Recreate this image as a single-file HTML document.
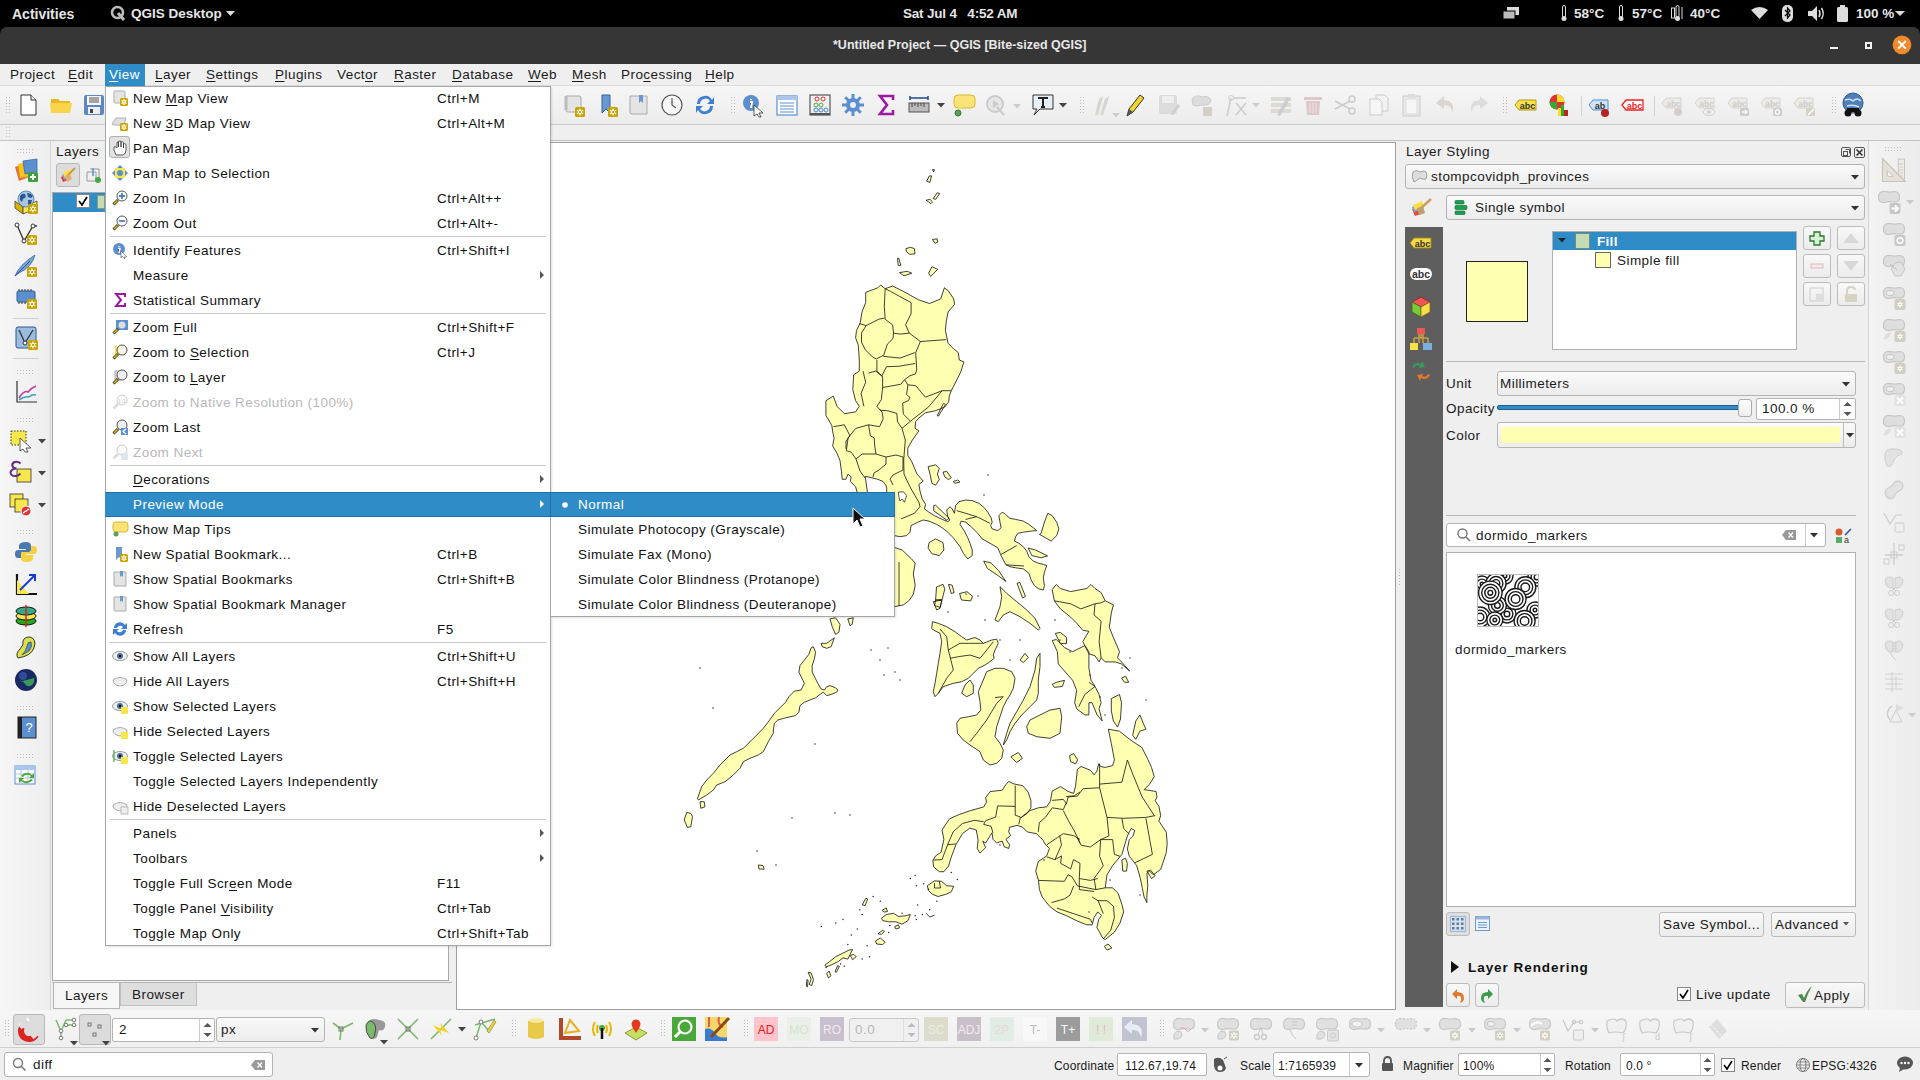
<!DOCTYPE html><html><head><meta charset="utf-8"><style>
html,body{margin:0;padding:0;width:1920px;height:1080px;overflow:hidden;background:#efefef;position:relative;font-family:"Liberation Sans",sans-serif}
.t{position:absolute;white-space:pre;font-family:"Liberation Sans",sans-serif}
u{text-decoration-thickness:1px;text-underline-offset:2px}
svg{overflow:visible}
</style></head><body>
<div style="position:absolute;left:0px;top:0px;width:1920px;height:27px;background:#000"></div>
<div class="t" style="left:12px;top:5.6px;font-size:14px;line-height:16px;color:#e6e6e6;font-weight:bold;letter-spacing:0px;">Activities</div>
<svg style="position:absolute;left:110px;top:5px;" width="16" height="17" viewBox="0 0 16 17"><circle cx="7.5" cy="7.5" r="5.5" fill="none" stroke="#bbb" stroke-width="2.6"/><path d="M8 8 L14 15" stroke="#bbb" stroke-width="3"/></svg>
<div class="t" style="left:131px;top:5.6px;font-size:13.5px;line-height:16px;color:#e6e6e6;font-weight:bold;letter-spacing:0px;">QGIS Desktop</div>
<svg style="position:absolute;left:226px;top:11px;" width="10" height="6" viewBox="0 0 10 6"><path d="M0 0 H9 L4.5 5Z" fill="#ddd"/></svg>
<div class="t" style="left:903px;top:5.6px;font-size:13.5px;line-height:16px;color:#e6e6e6;font-weight:bold;letter-spacing:-0.2px;">Sat Jul 4   4:52 AM</div>
<svg style="position:absolute;left:1503px;top:7px;" width="17" height="13" viewBox="0 0 17 13"><rect x="4" y="0" width="12" height="8" fill="#ddd"/><rect x="0" y="4" width="12" height="8" fill="#bbb" stroke="#000" stroke-width="1"/></svg>
<svg style="position:absolute;left:1561px;top:5px;" width="6" height="17" viewBox="0 0 6 17"><rect x="1.5" y="0.5" width="3" height="12" rx="1.5" fill="none" stroke="#ddd"/><circle cx="3" cy="13.5" r="2.5" fill="#ddd"/></svg>
<svg style="position:absolute;left:1618px;top:5px;" width="6" height="17" viewBox="0 0 6 17"><rect x="1.5" y="0.5" width="3" height="12" rx="1.5" fill="none" stroke="#ddd"/><circle cx="3" cy="13.5" r="2.5" fill="#ddd"/></svg>
<svg style="position:absolute;left:1671px;top:5px;" width="13" height="17" viewBox="0 0 13 17"><rect x="0.5" y="3" width="3" height="10" fill="none" stroke="#ddd"/><rect x="5" y="0.5" width="3" height="12" rx="1.5" fill="none" stroke="#ddd"/><circle cx="6.5" cy="13.5" r="2.5" fill="#ddd"/><path d="M11 2 V14" stroke="#ddd"/></svg>
<div class="t" style="left:1574px;top:5.6px;font-size:13.5px;line-height:16px;color:#e6e6e6;font-weight:bold;letter-spacing:0px;">58°C</div>
<div class="t" style="left:1632px;top:5.6px;font-size:13.5px;line-height:16px;color:#e6e6e6;font-weight:bold;letter-spacing:0px;">57°C</div>
<div class="t" style="left:1690px;top:5.6px;font-size:13.5px;line-height:16px;color:#e6e6e6;font-weight:bold;letter-spacing:0px;">40°C</div>
<svg style="position:absolute;left:1751px;top:7px;" width="17" height="12" viewBox="0 0 17 12"><path d="M0 3 Q8.5 -3 17 3 L8.5 12Z" fill="#ddd"/></svg>
<svg style="position:absolute;left:1782px;top:5px;" width="11" height="17" viewBox="0 0 11 17"><rect x="0" y="0" width="11" height="17" rx="5" fill="#ddd"/><path d="M3 5 L8 10 L5.5 13 V3 L8 6 L3 11" stroke="#000" stroke-width="1.2" fill="none"/></svg>
<svg style="position:absolute;left:1808px;top:6px;" width="17" height="15" viewBox="0 0 17 15"><path d="M0 5 H4 L9 0 V15 L4 10 H0Z" fill="#ddd"/><path d="M11 4 Q13 7.5 11 11 M13.5 2 Q17 7.5 13.5 13" stroke="#ddd" stroke-width="1.5" fill="none"/></svg>
<svg style="position:absolute;left:1837px;top:5px;" width="11" height="17" viewBox="0 0 11 17"><rect x="3" y="0" width="5" height="2" fill="#ddd"/><rect x="0" y="2" width="11" height="15" rx="1.5" fill="#ddd"/></svg>
<div class="t" style="left:1856px;top:5.6px;font-size:13.5px;line-height:16px;color:#e6e6e6;font-weight:bold;letter-spacing:0px;">100 %</div>
<svg style="position:absolute;left:1895px;top:11px;" width="10" height="6" viewBox="0 0 10 6"><path d="M0 0 H10 L5 5Z" fill="#ddd"/></svg>
<div style="position:absolute;left:0px;top:27px;width:1920px;height:10px;background:#000"></div>
<div style="position:absolute;left:0px;top:27px;width:1920px;height:37px;background:#363636;border-radius:7px 7px 0 0"></div>
<div class="t" style="left:833px;top:38.1px;font-size:12.5px;line-height:15px;color:#e8e8e8;font-weight:bold;letter-spacing:0px;">*Untitled Project — QGIS [Bite-sized QGIS]</div>
<div style="position:absolute;left:1830px;top:47px;width:8px;height:2px;background:#f2f2f2"></div>
<div style="position:absolute;left:1865px;top:42px;width:7px;height:7px;border:2px solid #f2f2f2;box-sizing:border-box"></div>
<svg style="position:absolute;left:1891px;top:34px;" width="22" height="22" viewBox="0 0 22 22"><circle cx="11" cy="10.8" r="9.4" fill="#f08a2c"/><path d="M7.2 7 L14.8 14.6 M14.8 7 L7.2 14.6" stroke="#fff" stroke-width="2"/></svg>
<div style="position:absolute;left:0px;top:64px;width:1920px;height:22px;background:#efefef"></div>
<div style="position:absolute;left:0px;top:85px;width:1920px;height:1px;background:#dcdcdc"></div>
<div style="position:absolute;left:105px;top:64px;width:40px;height:22px;background:#308cc6"></div>
<div class="t" style="left:10px;top:67.1px;font-size:13.5px;line-height:16px;color:#1a1a1a;font-weight:normal;letter-spacing:0.45px;">Project</div>
<div class="t" style="left:68px;top:67.1px;font-size:13.5px;line-height:16px;color:#1a1a1a;font-weight:normal;letter-spacing:0.45px;"><u>E</u>dit</div>
<div class="t" style="left:109px;top:67.1px;font-size:13.5px;line-height:16px;color:#fff;font-weight:normal;letter-spacing:0.45px;"><u>V</u>iew</div>
<div class="t" style="left:155px;top:67.1px;font-size:13.5px;line-height:16px;color:#1a1a1a;font-weight:normal;letter-spacing:0.45px;"><u>L</u>ayer</div>
<div class="t" style="left:206px;top:67.1px;font-size:13.5px;line-height:16px;color:#1a1a1a;font-weight:normal;letter-spacing:0.45px;"><u>S</u>ettings</div>
<div class="t" style="left:275px;top:67.1px;font-size:13.5px;line-height:16px;color:#1a1a1a;font-weight:normal;letter-spacing:0.45px;"><u>P</u>lugins</div>
<div class="t" style="left:337px;top:67.1px;font-size:13.5px;line-height:16px;color:#1a1a1a;font-weight:normal;letter-spacing:0.45px;">Vect<u>o</u>r</div>
<div class="t" style="left:394px;top:67.1px;font-size:13.5px;line-height:16px;color:#1a1a1a;font-weight:normal;letter-spacing:0.45px;"><u>R</u>aster</div>
<div class="t" style="left:452px;top:67.1px;font-size:13.5px;line-height:16px;color:#1a1a1a;font-weight:normal;letter-spacing:0.45px;"><u>D</u>atabase</div>
<div class="t" style="left:528px;top:67.1px;font-size:13.5px;line-height:16px;color:#1a1a1a;font-weight:normal;letter-spacing:0.45px;"><u>W</u>eb</div>
<div class="t" style="left:572px;top:67.1px;font-size:13.5px;line-height:16px;color:#1a1a1a;font-weight:normal;letter-spacing:0.45px;"><u>M</u>esh</div>
<div class="t" style="left:621px;top:67.1px;font-size:13.5px;line-height:16px;color:#1a1a1a;font-weight:normal;letter-spacing:0.45px;">Pro<u>c</u>essing</div>
<div class="t" style="left:705px;top:67.1px;font-size:13.5px;line-height:16px;color:#1a1a1a;font-weight:normal;letter-spacing:0.45px;"><u>H</u>elp</div>
<div style="position:absolute;left:0px;top:86px;width:1920px;height:38px;background:linear-gradient(#f6f6f6,#ececec)"></div>
<div style="position:absolute;left:0px;top:124px;width:1920px;height:1px;background:#c9c9c9"></div>
<div style="position:absolute;left:0px;top:125px;width:1920px;height:15px;background:#efefef"></div>
<div style="position:absolute;left:0px;top:140px;width:1920px;height:1px;background:#c4c4c4"></div>
<svg style="position:absolute;left:6px;top:97px;" width="4" height="20" viewBox="0 0 4 20"><rect x="0" y="0" width="1" height="1" fill="#bdbdbd"/><rect x="3" y="0" width="1" height="1" fill="#bdbdbd"/><rect x="0" y="3" width="1" height="1" fill="#bdbdbd"/><rect x="3" y="3" width="1" height="1" fill="#bdbdbd"/><rect x="0" y="6" width="1" height="1" fill="#bdbdbd"/><rect x="3" y="6" width="1" height="1" fill="#bdbdbd"/><rect x="0" y="9" width="1" height="1" fill="#bdbdbd"/><rect x="3" y="9" width="1" height="1" fill="#bdbdbd"/><rect x="0" y="12" width="1" height="1" fill="#bdbdbd"/><rect x="3" y="12" width="1" height="1" fill="#bdbdbd"/><rect x="0" y="15" width="1" height="1" fill="#bdbdbd"/><rect x="3" y="15" width="1" height="1" fill="#bdbdbd"/></svg>
<svg style="position:absolute;left:16px;top:93px;" width="24" height="24" viewBox="0 0 24 24"><path d="M5 2 H15 L20 7 V22 H5Z" fill="#fff" stroke="#333" stroke-width="1"/><path d="M15 2 V7 H20" fill="#eee" stroke="#333"/></svg>
<svg style="position:absolute;left:49px;top:93px;" width="24" height="24" viewBox="0 0 24 24"><path d="M2 6 H9 L11 8 H21 V20 H2Z" fill="#e8b820"/><path d="M1 10 H23 L21 20 H2Z" fill="#fad44a"/></svg>
<svg style="position:absolute;left:82px;top:93px;" width="24" height="24" viewBox="0 0 24 24"><rect x="2" y="2" width="20" height="20" rx="2" fill="#5b87c5"/><rect x="5" y="3" width="14" height="9" fill="#f4f4f4"/><path d="M7 5 H17 M7 7 H17 M7 9 H17" stroke="#555"/><rect x="6" y="14" width="12" height="7" fill="#eee"/><rect x="8" y="16" width="3" height="4" fill="#444"/></svg>
<svg style="position:absolute;left:562px;top:93px;" width="24" height="24" viewBox="0 0 24 24"><path d="M4 3 H17 Q19 3 19 5 V19 H6 Q4 19 4 17Z" fill="#e4e4e4" stroke="#aaa"/><path d="M4 3 V17" stroke="#bbb" stroke-width="3"/><rect x="13.0" y="14.0" width="10" height="10" rx="1.5" fill="#c9a400"/><circle cx="18" cy="19" r="1.62" fill="none" stroke="#fff" stroke-width="1"/><path d="M19.40 19.81 L21.12 20.80 M18.00 20.62 L18.00 22.60 M16.60 19.81 L14.88 20.80 M16.60 18.19 L14.88 17.20 M18.00 17.38 L18.00 15.40 M19.40 18.19 L21.12 17.20" stroke="#fff" stroke-width="1.2"/></svg>
<svg style="position:absolute;left:596px;top:93px;" width="24" height="24" viewBox="0 0 24 24"><path d="M6 2 H14 V20 L10 16 L6 20Z" fill="#6a98d0" stroke="#36649e"/><rect x="12.0" y="14.0" width="10" height="10" rx="1.5" fill="#c9a400"/><circle cx="17" cy="19" r="1.62" fill="none" stroke="#fff" stroke-width="1"/><path d="M18.40 19.81 L20.12 20.80 M17.00 20.62 L17.00 22.60 M15.60 19.81 L13.88 20.80 M15.60 18.19 L13.88 17.20 M17.00 17.38 L17.00 15.40 M18.40 18.19 L20.12 17.20" stroke="#fff" stroke-width="1.2"/></svg>
<svg style="position:absolute;left:627px;top:93px;" width="24" height="24" viewBox="0 0 24 24"><path d="M3 3 H20 V21 H5 Q3 21 3 19Z" fill="#e4e4e4" stroke="#aaa"/><path d="M12 2 H16 V10 L14 8 L12 10Z" fill="#6a98d0"/></svg>
<svg style="position:absolute;left:660px;top:93px;" width="24" height="24" viewBox="0 0 24 24"><circle cx="12" cy="12" r="10" fill="#f6f6f6" stroke="#555" stroke-width="1.2"/><path d="M12 5 V12 L16 15" stroke="#555" stroke-width="1.2" fill="none"/></svg>
<svg style="position:absolute;left:693px;top:93px;" width="24" height="24" viewBox="0 0 24 24"><path d="M4 11 A8 8 0 0 1 19 7 L21 4 V11 H14 L17 8 A5.5 5.5 0 0 0 7 11Z" fill="#3f7fcf"/><path d="M20 13 A8 8 0 0 1 5 17 L3 20 V13 H10 L7 16 A5.5 5.5 0 0 0 17 13Z" fill="#3f7fcf"/></svg>
<svg style="position:absolute;left:731px;top:97px;" width="4" height="20" viewBox="0 0 4 20"><rect x="0" y="0" width="1" height="1" fill="#bdbdbd"/><rect x="3" y="0" width="1" height="1" fill="#bdbdbd"/><rect x="0" y="3" width="1" height="1" fill="#bdbdbd"/><rect x="3" y="3" width="1" height="1" fill="#bdbdbd"/><rect x="0" y="6" width="1" height="1" fill="#bdbdbd"/><rect x="3" y="6" width="1" height="1" fill="#bdbdbd"/><rect x="0" y="9" width="1" height="1" fill="#bdbdbd"/><rect x="3" y="9" width="1" height="1" fill="#bdbdbd"/><rect x="0" y="12" width="1" height="1" fill="#bdbdbd"/><rect x="3" y="12" width="1" height="1" fill="#bdbdbd"/><rect x="0" y="15" width="1" height="1" fill="#bdbdbd"/><rect x="3" y="15" width="1" height="1" fill="#bdbdbd"/></svg>
<svg style="position:absolute;left:741px;top:93px;" width="24" height="24" viewBox="0 0 24 24"><circle cx="10" cy="10" r="8" fill="#5b8fd0"/><path d="M10 6 V7 M9 9 H11 L10 15" stroke="#fff" stroke-width="2"/><path d="M13 12 L22 20 L18 20 L20 24 L18 24 L16 21 L13 23Z" fill="#fff" stroke="#333" stroke-width="0.8"/></svg>
<svg style="position:absolute;left:775px;top:93px;" width="24" height="24" viewBox="0 0 24 24"><rect x="2" y="3" width="20" height="19" fill="#fff" stroke="#5b8fd0" stroke-width="1.2"/><rect x="2" y="3" width="20" height="4" fill="#aac6ea"/><path d="M5 10 H19 M5 13 H19 M5 16 H19 M5 19 H19" stroke="#5b8fd0"/></svg>
<svg style="position:absolute;left:808px;top:93px;" width="24" height="24" viewBox="0 0 24 24"><rect x="2" y="2" width="20" height="20" fill="none" stroke="#555" stroke-width="1.2"/><path d="M2 21 H22" stroke="#555" stroke-width="2"/><circle cx="9" cy="6" r="2" fill="none" stroke="#d33"/><circle cx="15" cy="6" r="2" fill="none" stroke="#d33"/><circle cx="8" cy="12" r="2" fill="none" stroke="#4a4"/><circle cx="13" cy="12" r="2" fill="none" stroke="#4a4"/><circle cx="8" cy="17" r="2" fill="none" stroke="#48c"/><circle cx="13" cy="17" r="2" fill="none" stroke="#48c"/><circle cx="18" cy="17" r="2" fill="none" stroke="#48c"/></svg>
<svg style="position:absolute;left:841px;top:93px;" width="24" height="24" viewBox="0 0 24 24"><g fill="#5b8fd0"><rect x="10.5" y="1" width="3" height="6" transform="rotate(0 12 12)"/><rect x="10.5" y="1" width="3" height="6" transform="rotate(45 12 12)"/><rect x="10.5" y="1" width="3" height="6" transform="rotate(90 12 12)"/><rect x="10.5" y="1" width="3" height="6" transform="rotate(135 12 12)"/><rect x="10.5" y="1" width="3" height="6" transform="rotate(180 12 12)"/><rect x="10.5" y="1" width="3" height="6" transform="rotate(225 12 12)"/><rect x="10.5" y="1" width="3" height="6" transform="rotate(270 12 12)"/><rect x="10.5" y="1" width="3" height="6" transform="rotate(315 12 12)"/></g><circle cx="12" cy="12" r="7" fill="#5b8fd0"/><circle cx="12" cy="12" r="3" fill="#eef"/></svg>
<svg style="position:absolute;left:874px;top:93px;" width="24" height="24" viewBox="0 0 24 24"><path d="M5 3 H19 V7 M18 3 H6 L13 12 L6 21 H19 V17" fill="none" stroke="#9a1aa0" stroke-width="2.6"/></svg>
<svg style="position:absolute;left:907px;top:93px;" width="24" height="24" viewBox="0 0 24 24"><path d="M3 5 H21 M3 3 V7 M21 3 V7" stroke="#1f4a8a" stroke-width="1.5"/><rect x="2" y="10" width="20" height="9" fill="#bbb" stroke="#555"/><path d="M5 10 V14 M8 10 V13 M11 10 V14 M14 10 V13 M17 10 V14" stroke="#444"/></svg>
<svg style="position:absolute;left:937px;top:103px;" width="8" height="5" viewBox="0 0 8 5"><path d="M0 0 H8 L4 4.5Z" fill="#444"/></svg>
<svg style="position:absolute;left:952px;top:93px;" width="24" height="24" viewBox="0 0 24 24"><rect x="2" y="2" width="21" height="13" rx="4" fill="#fbe37a" stroke="#d9b92a"/><path d="M7 14 L5 19 L11 14" fill="#fbe37a"/><circle cx="6" cy="20" r="3" fill="#5aa05a" stroke="#3a7a3a"/></svg>
<svg style="position:absolute;left:984px;top:93px;" width="24" height="24" viewBox="0 0 24 24"><circle cx="11" cy="11" r="8" fill="#e6e6e6" stroke="#ccc" stroke-width="2"/><path d="M9 7 L15 11 L9 15Z" fill="#ccc"/><path d="M13 14 L20 22" stroke="#ccc" stroke-width="2"/></svg>
<svg style="position:absolute;left:1013px;top:104px;" width="8" height="5" viewBox="0 0 8 5"><path d="M0 0 H8 L4 4.5Z" fill="#ccc"/></svg>
<svg style="position:absolute;left:1031px;top:93px;" width="24" height="24" viewBox="0 0 24 24"><path d="M2 2 H22 V16 H9 L3 22 L6 16 H2Z" fill="#e8f0f6" stroke="#333"/><path d="M7 5 H17 M12 5 V14 M10 14 H14" stroke="#222" stroke-width="2"/></svg>
<svg style="position:absolute;left:1059px;top:103px;" width="8" height="5" viewBox="0 0 8 5"><path d="M0 0 H8 L4 4.5Z" fill="#444"/></svg>
<svg style="position:absolute;left:1080px;top:97px;" width="4" height="20" viewBox="0 0 4 20"><rect x="0" y="0" width="1" height="1" fill="#bdbdbd"/><rect x="3" y="0" width="1" height="1" fill="#bdbdbd"/><rect x="0" y="3" width="1" height="1" fill="#bdbdbd"/><rect x="3" y="3" width="1" height="1" fill="#bdbdbd"/><rect x="0" y="6" width="1" height="1" fill="#bdbdbd"/><rect x="3" y="6" width="1" height="1" fill="#bdbdbd"/><rect x="0" y="9" width="1" height="1" fill="#bdbdbd"/><rect x="3" y="9" width="1" height="1" fill="#bdbdbd"/><rect x="0" y="12" width="1" height="1" fill="#bdbdbd"/><rect x="3" y="12" width="1" height="1" fill="#bdbdbd"/><rect x="0" y="15" width="1" height="1" fill="#bdbdbd"/><rect x="3" y="15" width="1" height="1" fill="#bdbdbd"/></svg>
<svg style="position:absolute;left:1090px;top:93px;" width="24" height="24" viewBox="0 0 24 24"><path d="M5 22 L9 6 L13 3 L12 8 L8 22Z" fill="#d8d6d0"/><path d="M10 22 L15 6 L19 3 L18 8 L13 22Z" fill="#d8d6d0"/></svg>
<svg style="position:absolute;left:1112px;top:113px;" width="8" height="5" viewBox="0 0 8 5"><path d="M0 0 H8 L4 4.5Z" fill="#ccc"/></svg>
<svg style="position:absolute;left:1123px;top:93px;" width="24" height="24" viewBox="0 0 24 24"><path d="M4 23 L6 16 L17 2 L21 5 L10 19Z" fill="#f2d430" stroke="#333" stroke-width="1"/><path d="M4 23 L6 16 L10 19Z" fill="#555"/></svg>
<svg style="position:absolute;left:1157px;top:93px;" width="24" height="24" viewBox="0 0 24 24"><rect x="2" y="2" width="18" height="19" rx="2" fill="#dcdcdc"/><rect x="5" y="3" width="12" height="7" fill="#eee"/><path d="M14 21 L21 11 L23 13 L16 22Z" fill="#ccc"/></svg>
<svg style="position:absolute;left:1190px;top:93px;" width="24" height="24" viewBox="0 0 24 24"><path d="M2 6 Q6 1 12 4 Q18 2 21 7 Q20 13 12 12 Q6 14 3 12Z" fill="#dcdcdc" stroke="#ccc"/><rect x="13" y="14" width="9" height="9" fill="#d2cfc8"/></svg>
<svg style="position:absolute;left:1224px;top:93px;" width="24" height="24" viewBox="0 0 24 24"><circle cx="7" cy="5" r="2.5" fill="none" stroke="#ccc"/><path d="M9 5 H22 M3 23 L7 5 M12 10 L22 22 M22 10 L12 22" stroke="#ccc" stroke-width="1.5"/></svg>
<svg style="position:absolute;left:1252px;top:103px;" width="8" height="5" viewBox="0 0 8 5"><path d="M0 0 H8 L4 4.5Z" fill="#ccc"/></svg>
<svg style="position:absolute;left:1269px;top:93px;" width="24" height="24" viewBox="0 0 24 24"><rect x="2" y="4" width="20" height="4" fill="#dcdbd3"/><rect x="2" y="10" width="20" height="4" fill="#dcdbd3"/><rect x="2" y="16" width="20" height="4" fill="#dcdbd3"/><path d="M8 22 L18 4 L21 6 L11 23Z" fill="#ccc"/></svg>
<svg style="position:absolute;left:1301px;top:93px;" width="24" height="24" viewBox="0 0 24 24"><rect x="3" y="4" width="18" height="3" fill="#ddc8c8"/><path d="M5 8 H19 L18 22 H6Z" fill="#ddc8c8"/><path d="M9 10 V20 M12 10 V20 M15 10 V20" stroke="#f0e6e6"/></svg>
<svg style="position:absolute;left:1334px;top:93px;" width="24" height="24" viewBox="0 0 24 24"><circle cx="18" cy="18" r="3" fill="none" stroke="#ccc" stroke-width="1.5"/><circle cx="18" cy="6" r="3" fill="none" stroke="#ccc" stroke-width="1.5"/><path d="M1 8 L16 16 M1 16 L16 8" stroke="#ccc" stroke-width="1.5"/></svg>
<svg style="position:absolute;left:1367px;top:93px;" width="24" height="24" viewBox="0 0 24 24"><path d="M9 2 H18 L21 5 V18 H9Z" fill="#f2f2f2" stroke="#ccc"/><path d="M3 6 H12 L15 9 V22 H3Z" fill="#f6f6f6" stroke="#ccc"/></svg>
<svg style="position:absolute;left:1400px;top:93px;" width="24" height="24" viewBox="0 0 24 24"><rect x="3" y="3" width="17" height="20" fill="#e8e8e8" stroke="#ccc"/><rect x="6" y="6" width="11" height="15" fill="#f6f6f6" stroke="#ddd"/><rect x="8" y="1" width="7" height="4" fill="#ddd"/></svg>
<svg style="position:absolute;left:1434px;top:93px;" width="24" height="24" viewBox="0 0 24 24"><path d="M10 3 L2 10 L10 16 V12 Q18 12 18 20 Q22 8 10 7Z" fill="#dcd6d0"/></svg>
<svg style="position:absolute;left:1466px;top:93px;" width="24" height="24" viewBox="0 0 24 24"><path d="M14 3 L22 10 L14 16 V12 Q6 12 6 20 Q2 8 14 7Z" fill="#dcdcdc"/></svg>
<svg style="position:absolute;left:1503px;top:97px;" width="4" height="20" viewBox="0 0 4 20"><rect x="0" y="0" width="1" height="1" fill="#bdbdbd"/><rect x="3" y="0" width="1" height="1" fill="#bdbdbd"/><rect x="0" y="3" width="1" height="1" fill="#bdbdbd"/><rect x="3" y="3" width="1" height="1" fill="#bdbdbd"/><rect x="0" y="6" width="1" height="1" fill="#bdbdbd"/><rect x="3" y="6" width="1" height="1" fill="#bdbdbd"/><rect x="0" y="9" width="1" height="1" fill="#bdbdbd"/><rect x="3" y="9" width="1" height="1" fill="#bdbdbd"/><rect x="0" y="12" width="1" height="1" fill="#bdbdbd"/><rect x="3" y="12" width="1" height="1" fill="#bdbdbd"/><rect x="0" y="15" width="1" height="1" fill="#bdbdbd"/><rect x="3" y="15" width="1" height="1" fill="#bdbdbd"/></svg>
<svg style="position:absolute;left:1514px;top:93px;" width="24" height="24" viewBox="0 0 24 24"><path d="M1 12 L5 7 H22 V17 H5Z" fill="#f7e04a" stroke="#b09a10"/><text x="13.5" y="15.5" font-size="9" font-weight="bold" text-anchor="middle" font-family="Liberation Sans" fill="#333">abc</text></svg>
<svg style="position:absolute;left:1548px;top:93px;" width="24" height="24" viewBox="0 0 24 24"><circle cx="9" cy="9" r="7.5" fill="#d33"/><path d="M9 9 V1.5 A7.5 7.5 0 0 1 16.5 9Z" fill="#f7dd2a"/><path d="M9 9 H1.5 A7.5 7.5 0 0 0 9 16.5Z" fill="#3a3"/><rect x="10" y="15" width="3" height="8" fill="#f7dd2a"/><rect x="13" y="12" width="3" height="11" fill="#3a3"/><rect x="16" y="17" width="4" height="6" fill="#b22"/></svg>
<div style="position:absolute;left:1581px;top:96px;width:1px;height:20px;background:#d0d0d0"></div>
<svg style="position:absolute;left:1588px;top:93px;" width="24" height="24" viewBox="0 0 24 24"><path d="M1 12 L5 7 H20 V17 H5Z" fill="#cfe3f7" stroke="#4c8ed8"/><text x="12" y="15.5" font-size="9" font-weight="bold" text-anchor="middle" font-family="Liberation Sans" fill="#333">ab</text><circle cx="17" cy="20" r="4" fill="#b22"/></svg>
<svg style="position:absolute;left:1621px;top:93px;" width="24" height="24" viewBox="0 0 24 24"><path d="M1 12 L5 7 H22 V17 H5Z" fill="#fff" stroke="#e22" stroke-width="1.3"/><text x="13.5" y="15.5" font-size="9" font-weight="bold" text-anchor="middle" font-family="Liberation Sans" fill="#e22">abc</text></svg>
<div style="position:absolute;left:1654px;top:96px;width:1px;height:20px;background:#d0d0d0"></div>
<svg style="position:absolute;left:1661px;top:93px;" width="24" height="24" viewBox="0 0 24 24"><path d="M1 10 L5 5 H20 V15 H5Z" fill="#ecebe6" stroke="#d6d4cc"/><text x="12.5" y="13.5" font-size="8.5" font-weight="bold" text-anchor="middle" font-family="Liberation Sans" fill="#ccc">abc</text><circle cx="17" cy="19" r="4" fill="#d6cccc"/></svg>
<svg style="position:absolute;left:1694px;top:93px;" width="24" height="24" viewBox="0 0 24 24"><path d="M1 10 L5 5 H20 V15 H5Z" fill="#ecebe6" stroke="#d6d4cc"/><text x="12.5" y="13.5" font-size="8.5" font-weight="bold" text-anchor="middle" font-family="Liberation Sans" fill="#ccc">abc</text><ellipse cx="15" cy="19" rx="6" ry="3.5" fill="none" stroke="#ccc"/><circle cx="15" cy="19" r="1.8" fill="#ccc"/></svg>
<svg style="position:absolute;left:1727px;top:93px;" width="24" height="24" viewBox="0 0 24 24"><path d="M1 10 L5 5 H20 V15 H5Z" fill="#ecebe6" stroke="#d6d4cc"/><text x="12.5" y="13.5" font-size="8.5" font-weight="bold" text-anchor="middle" font-family="Liberation Sans" fill="#ccc">abc</text><rect x="13" y="15" width="9" height="8" rx="1.5" fill="#ccc"/><path d="M15 19 H20 M18 17 L20 19 L18 21" stroke="#fff" stroke-width="1.5" fill="none"/></svg>
<svg style="position:absolute;left:1760px;top:93px;" width="24" height="24" viewBox="0 0 24 24"><path d="M1 10 L5 5 H20 V15 H5Z" fill="#ecebe6" stroke="#d6d4cc"/><text x="12.5" y="13.5" font-size="8.5" font-weight="bold" text-anchor="middle" font-family="Liberation Sans" fill="#ccc">abc</text><rect x="13" y="15" width="9" height="8" rx="1.5" fill="#ccc"/><circle cx="17.5" cy="19" r="2.2" fill="none" stroke="#fff" stroke-width="1.3"/></svg>
<svg style="position:absolute;left:1793px;top:93px;" width="24" height="24" viewBox="0 0 24 24"><path d="M1 10 L5 5 H20 V15 H5Z" fill="#ecebe6" stroke="#d6d4cc"/><text x="12.5" y="13.5" font-size="8.5" font-weight="bold" text-anchor="middle" font-family="Liberation Sans" fill="#ccc">abc</text><rect x="13" y="15" width="9" height="8" rx="1.5" fill="#d6d2c4"/><path d="M15 22 L21 16" stroke="#fff" stroke-width="1.5"/></svg>
<svg style="position:absolute;left:1832px;top:97px;" width="4" height="20" viewBox="0 0 4 20"><rect x="0" y="0" width="1" height="1" fill="#bdbdbd"/><rect x="3" y="0" width="1" height="1" fill="#bdbdbd"/><rect x="0" y="3" width="1" height="1" fill="#bdbdbd"/><rect x="3" y="3" width="1" height="1" fill="#bdbdbd"/><rect x="0" y="6" width="1" height="1" fill="#bdbdbd"/><rect x="3" y="6" width="1" height="1" fill="#bdbdbd"/><rect x="0" y="9" width="1" height="1" fill="#bdbdbd"/><rect x="3" y="9" width="1" height="1" fill="#bdbdbd"/><rect x="0" y="12" width="1" height="1" fill="#bdbdbd"/><rect x="3" y="12" width="1" height="1" fill="#bdbdbd"/><rect x="0" y="15" width="1" height="1" fill="#bdbdbd"/><rect x="3" y="15" width="1" height="1" fill="#bdbdbd"/></svg>
<svg style="position:absolute;left:1841px;top:93px;" width="24" height="24" viewBox="0 0 24 24"><circle cx="12" cy="10" r="10" fill="#4f7fb8" stroke="#2d5a8e"/><path d="M4 7 Q9 5 12 8 Q16 4 20 8 M6 13 Q12 11 18 14" stroke="#cfe0f0" stroke-width="1.5" fill="none"/><circle cx="7" cy="20" r="3.5" fill="#111"/><circle cx="17" cy="20" r="3.5" fill="#111"/><rect x="6" y="15" width="12" height="4" fill="#111"/></svg>
<svg style="position:absolute;left:6px;top:127px;" width="4" height="12" viewBox="0 0 4 12"><rect x="0" y="0" width="1" height="1" fill="#bdbdbd"/><rect x="3" y="0" width="1" height="1" fill="#bdbdbd"/><rect x="0" y="3" width="1" height="1" fill="#bdbdbd"/><rect x="3" y="3" width="1" height="1" fill="#bdbdbd"/><rect x="0" y="6" width="1" height="1" fill="#bdbdbd"/><rect x="3" y="6" width="1" height="1" fill="#bdbdbd"/><rect x="0" y="9" width="1" height="1" fill="#bdbdbd"/><rect x="3" y="9" width="1" height="1" fill="#bdbdbd"/></svg>
<div style="position:absolute;left:0px;top:141px;width:50px;height:869px;background:linear-gradient(90deg,#f6f6f6,#eeeeee)"></div>
<div style="position:absolute;left:50px;top:141px;width:1px;height:869px;background:#d4d4d4"></div>
<svg style="position:absolute;left:17px;top:149px;" width="20" height="4" viewBox="0 0 20 4"><rect x="0" y="0" width="1" height="1" fill="#bdbdbd"/><rect x="0" y="3" width="1" height="1" fill="#bdbdbd"/><rect x="3" y="0" width="1" height="1" fill="#bdbdbd"/><rect x="3" y="3" width="1" height="1" fill="#bdbdbd"/><rect x="6" y="0" width="1" height="1" fill="#bdbdbd"/><rect x="6" y="3" width="1" height="1" fill="#bdbdbd"/><rect x="9" y="0" width="1" height="1" fill="#bdbdbd"/><rect x="9" y="3" width="1" height="1" fill="#bdbdbd"/><rect x="12" y="0" width="1" height="1" fill="#bdbdbd"/><rect x="12" y="3" width="1" height="1" fill="#bdbdbd"/><rect x="15" y="0" width="1" height="1" fill="#bdbdbd"/><rect x="15" y="3" width="1" height="1" fill="#bdbdbd"/></svg>
<svg style="position:absolute;left:14px;top:158px;" width="24" height="24" viewBox="0 0 24 24"><path d="M1 9 L11 5 L15 19 L5 23Z" fill="#e2703a"/><path d="M4 6 L14 4 L16 18 L6 20Z" fill="#f5c518"/><path d="M9 3 L23 1 L23 14 L11 16Z" fill="#5b8fd0" stroke="#3a6aa8" stroke-width="0.8"/><rect x="14.0" y="14.0" width="10" height="10" rx="1.5" fill="#3f9c3f"/><path d="M19 16 V22 M16 19 H22" stroke="#fff" stroke-width="1.8"/></svg>
<svg style="position:absolute;left:14px;top:190px;" width="24" height="24" viewBox="0 0 24 24"><path d="M1 11 L9 17 L9 24 L1 18Z" fill="#d9b200" stroke="#444" stroke-width="0.8"/><path d="M9 17 L23 11 L23 18 L9 24Z" fill="#f7e74a" stroke="#444" stroke-width="0.8"/><circle cx="12" cy="9" r="8" fill="#a9c6e6" stroke="#4a74a8" stroke-width="0.8"/><path d="M6 6 Q8 3 11 4 L12 7 L9 9 L8 12 L6 10Z M13 3 Q17 3 19 6 L17 8 L14 7Z M14 10 L18 10 L17 14 L14 15Z" fill="#2d5a8e"/><rect x="14.0" y="14.0" width="10" height="10" rx="1.5" fill="#c9a400"/><circle cx="19" cy="19" r="1.62" fill="none" stroke="#fff" stroke-width="1"/><path d="M20.40 19.81 L22.12 20.80 M19.00 20.62 L19.00 22.60 M17.60 19.81 L15.88 20.80 M17.60 18.19 L15.88 17.20 M19.00 17.38 L19.00 15.40 M20.40 18.19 L22.12 17.20" stroke="#fff" stroke-width="1.2"/></svg>
<svg style="position:absolute;left:14px;top:221px;" width="24" height="24" viewBox="0 0 24 24"><path d="M3 4 L10 20 L19 5 H23" stroke="#333" stroke-width="1.3" fill="none"/><circle cx="3" cy="4" r="2" fill="#fff" stroke="#333"/><circle cx="10" cy="20" r="2" fill="#fff" stroke="#333"/><circle cx="19" cy="5" r="2" fill="#fff" stroke="#333"/><rect x="13.0" y="14.0" width="10" height="10" rx="1.5" fill="#c9a400"/><circle cx="18" cy="19" r="1.62" fill="none" stroke="#fff" stroke-width="1"/><path d="M19.40 19.81 L21.12 20.80 M18.00 20.62 L18.00 22.60 M16.60 19.81 L14.88 20.80 M16.60 18.19 L14.88 17.20 M18.00 17.38 L18.00 15.40 M19.40 18.19 L21.12 17.20" stroke="#fff" stroke-width="1.2"/></svg>
<svg style="position:absolute;left:14px;top:253px;" width="24" height="24" viewBox="0 0 24 24"><path d="M1 23 Q5 12 21 2 Q18 14 5 20Z" fill="#7aa3d3" stroke="#3a6aa8" stroke-width="0.8"/><path d="M1 23 L16 8" stroke="#2d5a8e"/><rect x="13.0" y="14.0" width="10" height="10" rx="1.5" fill="#c9a400"/><circle cx="18" cy="19" r="1.62" fill="none" stroke="#fff" stroke-width="1"/><path d="M19.40 19.81 L21.12 20.80 M18.00 20.62 L18.00 22.60 M16.60 19.81 L14.88 20.80 M16.60 18.19 L14.88 17.20 M18.00 17.38 L18.00 15.40 M19.40 18.19 L21.12 17.20" stroke="#fff" stroke-width="1.2"/></svg>
<svg style="position:absolute;left:14px;top:285px;" width="24" height="24" viewBox="0 0 24 24"><rect x="3" y="6" width="18" height="11" rx="1.5" fill="#5b8fd0" stroke="#2d5a8e"/><path d="M5 4 V6 M8 4 V6 M11 4 V6 M14 4 V6 M17 4 V6 M5 17 V19 M8 17 V19 M11 17 V19 M14 17 V19 M17 17 V19" stroke="#333"/><rect x="13.0" y="14.0" width="10" height="10" rx="1.5" fill="#c9a400"/><circle cx="18" cy="19" r="1.62" fill="none" stroke="#fff" stroke-width="1"/><path d="M19.40 19.81 L21.12 20.80 M18.00 20.62 L18.00 22.60 M16.60 19.81 L14.88 20.80 M16.60 18.19 L14.88 17.20 M18.00 17.38 L18.00 15.40 M19.40 18.19 L21.12 17.20" stroke="#fff" stroke-width="1.2"/></svg>
<div style="position:absolute;left:13px;top:318px;width:26px;height:1px;background:#d0d0d0"></div>
<svg style="position:absolute;left:14px;top:325px;" width="24" height="24" viewBox="0 0 24 24"><rect x="2" y="2" width="20" height="21" rx="2" fill="#9bbbe0" stroke="#2d5a8e"/><path d="M5 5 L11 18 L19 5" stroke="#333" stroke-width="1.3" fill="none"/><circle cx="11" cy="18" r="2" fill="#fff" stroke="#333"/><rect x="14.0" y="15.0" width="10" height="10" rx="1.5" fill="#c9a400"/><circle cx="19" cy="20" r="1.62" fill="none" stroke="#fff" stroke-width="1"/><path d="M20.40 20.81 L22.12 21.80 M19.00 21.62 L19.00 23.60 M17.60 20.81 L15.88 21.80 M17.60 19.19 L15.88 18.20 M19.00 18.38 L19.00 16.40 M20.40 19.19 L22.12 18.20" stroke="#fff" stroke-width="1.2"/></svg>
<div style="position:absolute;left:13px;top:358px;width:26px;height:1px;background:#d0d0d0"></div>
<svg style="position:absolute;left:17px;top:370px;" width="20" height="4" viewBox="0 0 20 4"><rect x="0" y="0" width="1" height="1" fill="#bdbdbd"/><rect x="0" y="3" width="1" height="1" fill="#bdbdbd"/><rect x="3" y="0" width="1" height="1" fill="#bdbdbd"/><rect x="3" y="3" width="1" height="1" fill="#bdbdbd"/><rect x="6" y="0" width="1" height="1" fill="#bdbdbd"/><rect x="6" y="3" width="1" height="1" fill="#bdbdbd"/><rect x="9" y="0" width="1" height="1" fill="#bdbdbd"/><rect x="9" y="3" width="1" height="1" fill="#bdbdbd"/><rect x="12" y="0" width="1" height="1" fill="#bdbdbd"/><rect x="12" y="3" width="1" height="1" fill="#bdbdbd"/><rect x="15" y="0" width="1" height="1" fill="#bdbdbd"/><rect x="15" y="3" width="1" height="1" fill="#bdbdbd"/></svg>
<svg style="position:absolute;left:14px;top:380px;" width="24" height="24" viewBox="0 0 24 24"><path d="M3 1 V22 H23" stroke="#333" stroke-width="1.2" fill="none"/><path d="M5 18 Q10 10 14 12 Q17 8 22 6" stroke="#c03aa0" stroke-width="1.5" fill="none"/><path d="M5 20 Q11 16 15 17 Q18 14 22 15" stroke="#3aa0c0" stroke-width="1.5" fill="none"/></svg>
<svg style="position:absolute;left:17px;top:418px;" width="20" height="4" viewBox="0 0 20 4"><rect x="0" y="0" width="1" height="1" fill="#bdbdbd"/><rect x="0" y="3" width="1" height="1" fill="#bdbdbd"/><rect x="3" y="0" width="1" height="1" fill="#bdbdbd"/><rect x="3" y="3" width="1" height="1" fill="#bdbdbd"/><rect x="6" y="0" width="1" height="1" fill="#bdbdbd"/><rect x="6" y="3" width="1" height="1" fill="#bdbdbd"/><rect x="9" y="0" width="1" height="1" fill="#bdbdbd"/><rect x="9" y="3" width="1" height="1" fill="#bdbdbd"/><rect x="12" y="0" width="1" height="1" fill="#bdbdbd"/><rect x="12" y="3" width="1" height="1" fill="#bdbdbd"/><rect x="15" y="0" width="1" height="1" fill="#bdbdbd"/><rect x="15" y="3" width="1" height="1" fill="#bdbdbd"/></svg>
<svg style="position:absolute;left:9px;top:428px;" width="24" height="24" viewBox="0 0 24 24"><rect x="2" y="3" width="15" height="14" fill="#f7e74a" stroke="#333" stroke-dasharray="1.5 1.5"/><path d="M11 10 L22 20 L17 20 L19 24 L16 24 L14 21 L11 23Z" fill="#fff" stroke="#333" stroke-width="0.8"/></svg>
<svg style="position:absolute;left:38px;top:439px;" width="8" height="5" viewBox="0 0 8 5"><path d="M0 0 H8 L4 4.5Z" fill="#444"/></svg>
<svg style="position:absolute;left:9px;top:460px;" width="24" height="24" viewBox="0 0 24 24"><rect x="8" y="9" width="14" height="13" fill="#f7e74a" stroke="#333" stroke-width="0.8"/><path d="M11.5 3.5 Q9 1 5.5 2 Q2.5 3.5 3.5 6.5 Q4.5 8.5 7.5 8.5 Q2 9 1.5 12.5 Q2 16.5 7 16 Q10 15.5 11.5 13.5" fill="none" stroke="#6a2a80" stroke-width="2"/></svg>
<svg style="position:absolute;left:38px;top:471px;" width="8" height="5" viewBox="0 0 8 5"><path d="M0 0 H8 L4 4.5Z" fill="#444"/></svg>
<svg style="position:absolute;left:9px;top:492px;" width="24" height="24" viewBox="0 0 24 24"><rect x="1" y="2" width="13" height="13" fill="#f7e74a" stroke="#333" stroke-width="0.8"/><rect x="6" y="7" width="13" height="13" fill="#f7e74a" stroke="#333" stroke-width="0.8"/><circle cx="17" cy="19" r="5" fill="#d33" stroke="#fff"/><path d="M14 21 L20 17" stroke="#fff" stroke-width="1.5"/></svg>
<svg style="position:absolute;left:38px;top:503px;" width="8" height="5" viewBox="0 0 8 5"><path d="M0 0 H8 L4 4.5Z" fill="#444"/></svg>
<svg style="position:absolute;left:17px;top:530px;" width="20" height="4" viewBox="0 0 20 4"><rect x="0" y="0" width="1" height="1" fill="#bdbdbd"/><rect x="0" y="3" width="1" height="1" fill="#bdbdbd"/><rect x="3" y="0" width="1" height="1" fill="#bdbdbd"/><rect x="3" y="3" width="1" height="1" fill="#bdbdbd"/><rect x="6" y="0" width="1" height="1" fill="#bdbdbd"/><rect x="6" y="3" width="1" height="1" fill="#bdbdbd"/><rect x="9" y="0" width="1" height="1" fill="#bdbdbd"/><rect x="9" y="3" width="1" height="1" fill="#bdbdbd"/><rect x="12" y="0" width="1" height="1" fill="#bdbdbd"/><rect x="12" y="3" width="1" height="1" fill="#bdbdbd"/><rect x="15" y="0" width="1" height="1" fill="#bdbdbd"/><rect x="15" y="3" width="1" height="1" fill="#bdbdbd"/></svg>
<svg style="position:absolute;left:14px;top:540px;" width="24" height="24" viewBox="0 0 24 24"><path d="M12 2 Q5 2 5 6 V9 H12 V10 H4 Q1 10 1 14 Q1 18 4 18 H7 V14 Q7 12 9 12 H15 Q17 12 17 10 V6 Q17 2 12 2Z" fill="#4a7ab0"/><path d="M12 22 Q19 22 19 18 V15 H12 V14 H20 Q23 14 23 10 Q23 6 20 6 H17 V10 Q17 12 15 12 H9 Q7 12 7 14 V18 Q7 22 12 22Z" fill="#f5d040"/></svg>
<svg style="position:absolute;left:14px;top:572px;" width="24" height="24" viewBox="0 0 24 24"><path d="M2 22 H23 M3 2 V23" stroke="#111" stroke-width="2.2"/><path d="M3 22 L3 8 L15 22Z" fill="#f7e74a"/><path d="M6 18 L21 3" stroke="#1a3ad8" stroke-width="2"/><path d="M15 3 H21 V9" stroke="#1a3ad8" stroke-width="2" fill="none"/></svg>
<svg style="position:absolute;left:14px;top:604px;" width="24" height="24" viewBox="0 0 24 24"><ellipse cx="12" cy="17" rx="10" ry="4" fill="#2a2" stroke="#111"/><ellipse cx="12" cy="12" rx="10" ry="4" fill="#f7e74a" stroke="#111"/><ellipse cx="12" cy="7" rx="10" ry="4" fill="#3a8" stroke="#111"/><path d="M12 1 V23" stroke="#d22" stroke-width="1.5"/></svg>
<svg style="position:absolute;left:14px;top:636px;" width="24" height="24" viewBox="0 0 24 24"><path d="M4 22 Q1 18 6 13 Q10 9 9 5 Q10 1 16 1 Q23 3 20 12 Q17 20 4 22Z" fill="#d9e04a" stroke="#333"/><path d="M8 19 Q12 15 13 10 Q14 5 17 6 Q19 10 15 15Z" fill="#5b8fd0" stroke="#333" stroke-width="0.6"/></svg>
<svg style="position:absolute;left:14px;top:668px;" width="24" height="24" viewBox="0 0 24 24"><circle cx="12" cy="12" r="11" fill="#1a2a60"/><path d="M5 14 Q9 12 11 16 Q14 20 18 17 Q21 14 20 10" fill="#3a9a5a"/><circle cx="9" cy="8" r="4" fill="#3a5ab0" opacity="0.7"/></svg>
<svg style="position:absolute;left:17px;top:706px;" width="20" height="4" viewBox="0 0 20 4"><rect x="0" y="0" width="1" height="1" fill="#bdbdbd"/><rect x="0" y="3" width="1" height="1" fill="#bdbdbd"/><rect x="3" y="0" width="1" height="1" fill="#bdbdbd"/><rect x="3" y="3" width="1" height="1" fill="#bdbdbd"/><rect x="6" y="0" width="1" height="1" fill="#bdbdbd"/><rect x="6" y="3" width="1" height="1" fill="#bdbdbd"/><rect x="9" y="0" width="1" height="1" fill="#bdbdbd"/><rect x="9" y="3" width="1" height="1" fill="#bdbdbd"/><rect x="12" y="0" width="1" height="1" fill="#bdbdbd"/><rect x="12" y="3" width="1" height="1" fill="#bdbdbd"/><rect x="15" y="0" width="1" height="1" fill="#bdbdbd"/><rect x="15" y="3" width="1" height="1" fill="#bdbdbd"/></svg>
<svg style="position:absolute;left:14px;top:715px;" width="24" height="24" viewBox="0 0 24 24"><rect x="4" y="2" width="18" height="21" fill="#5b8fd0" stroke="#222"/><rect x="4" y="2" width="4" height="21" fill="#222"/><text x="15" y="17" font-size="13" text-anchor="middle" font-family="Liberation Sans" fill="#fff">?</text></svg>
<svg style="position:absolute;left:17px;top:754px;" width="20" height="4" viewBox="0 0 20 4"><rect x="0" y="0" width="1" height="1" fill="#bdbdbd"/><rect x="0" y="3" width="1" height="1" fill="#bdbdbd"/><rect x="3" y="0" width="1" height="1" fill="#bdbdbd"/><rect x="3" y="3" width="1" height="1" fill="#bdbdbd"/><rect x="6" y="0" width="1" height="1" fill="#bdbdbd"/><rect x="6" y="3" width="1" height="1" fill="#bdbdbd"/><rect x="9" y="0" width="1" height="1" fill="#bdbdbd"/><rect x="9" y="3" width="1" height="1" fill="#bdbdbd"/><rect x="12" y="0" width="1" height="1" fill="#bdbdbd"/><rect x="12" y="3" width="1" height="1" fill="#bdbdbd"/><rect x="15" y="0" width="1" height="1" fill="#bdbdbd"/><rect x="15" y="3" width="1" height="1" fill="#bdbdbd"/></svg>
<svg style="position:absolute;left:14px;top:763px;" width="24" height="24" viewBox="0 0 24 24"><rect x="1" y="3" width="20" height="18" fill="#fff" stroke="#5b8fd0"/><rect x="1" y="3" width="20" height="4" fill="#aac6ea"/><path d="M1 11 H21 M1 15 H21 M7 7 V21 M14 7 V21" stroke="#aac6ea"/><path d="M7 13 Q12 7 18 12 L20 10 V15 H15 L17 13 Q12 10 9 14Z" fill="#4aa83a"/><path d="M19 17 Q13 23 7 18 L5 20 V15 H10 L8 17 Q13 20 17 16Z" fill="#4aa83a"/></svg>
<div style="position:absolute;left:51px;top:141px;width:405px;height:869px;background:#efefef"></div>
<div class="t" style="left:56px;top:143.6px;font-size:13.5px;line-height:16px;color:#1a1a1a;font-weight:normal;letter-spacing:0.45px;">Layers</div>
<div style="position:absolute;left:56px;top:163px;width:24px;height:24px;background:#dcdcdc;border:1px solid #b8b8b8;border-radius:3px;box-sizing:border-box"></div>
<svg style="position:absolute;left:60px;top:167px;" width="16" height="16" viewBox="0 0 16 16"><path d="M1 10 L8 6 L10 12 L3 15Z" fill="#e33"/><path d="M2 8 L9 4 L11 10 L4 13Z" fill="#7ac"/><path d="M3 6 L10 2 L12 8 L5 11Z" fill="#fd4"/><path d="M7 9 L15 1" stroke="#c89a50" stroke-width="2"/><path d="M5 9 L10 7 L12 12 L7 15Z" fill="#e0b070"/></svg>
<svg style="position:absolute;left:85px;top:167px;" width="16" height="16" viewBox="0 0 16 16"><path d="M2 5 H11 V14 H2Z" fill="none" stroke="#999"/><path d="M5 2 H14 V11" fill="none" stroke="#999"/><path d="M8 1 V9" stroke="#5b8fd0" stroke-width="1.5"/><circle cx="13" cy="13" r="3" fill="#4a4"/></svg>
<div style="position:absolute;left:52px;top:192px;width:397px;height:789px;background:#fff;border:1px solid #a8a8a8;border-right:1px solid #a8a8a8;box-sizing:border-box"></div>
<div style="position:absolute;left:53px;top:193px;width:396px;height:19px;background:#308cc6"></div>
<div style="position:absolute;left:76px;top:194px;width:14px;height:14px;background:#fff;border:1px solid #888;box-sizing:border-box"></div>
<svg style="position:absolute;left:78px;top:196px;" width="10" height="10" viewBox="0 0 10 10"><path d="M1 5 L4 9 L9 1" stroke="#000" stroke-width="1.8" fill="none"/></svg>
<div style="position:absolute;left:97px;top:195px;width:8px;height:14px;background:#c3dcb6;border:1px solid #8a9a80;box-sizing:border-box"></div>
<div style="position:absolute;left:52px;top:982px;width:400px;height:1px;background:#b5b5b5"></div>
<div style="position:absolute;left:53px;top:983px;width:67px;height:26px;background:#f6f6f6;border:1px solid #b5b5b5;border-top:none;box-sizing:border-box"></div>
<div style="position:absolute;left:120px;top:983px;width:77px;height:23px;background:#dedede;border:1px solid #c0c0c0;border-top:none;box-sizing:border-box"></div>
<div class="t" style="left:65px;top:987.6px;font-size:13.5px;line-height:16px;color:#1a1a1a;font-weight:normal;letter-spacing:0.45px;">Layers</div>
<div class="t" style="left:132px;top:986.6px;font-size:13.5px;line-height:16px;color:#1a1a1a;font-weight:normal;letter-spacing:0.45px;">Browser</div>
<div style="position:absolute;left:456px;top:142px;width:940px;height:868px;background:#fff;border:1px solid #a0a0a0;box-sizing:border-box"></div>
<div style="position:absolute;left:1396px;top:141px;width:472px;height:869px;background:#efefef"></div>
<div class="t" style="left:1406px;top:143.6px;font-size:13.5px;line-height:16px;color:#1a1a1a;font-weight:normal;letter-spacing:0.45px;">Layer Styling</div>
<div style="position:absolute;left:1841px;top:147px;width:10px;height:10px;border:1px solid #555;border-radius:2px;box-sizing:border-box"></div>
<svg style="position:absolute;left:1843px;top:149px;" width="7" height="7" viewBox="0 0 7 7"><rect x="0.5" y="2.5" width="4" height="4" fill="none" stroke="#555"/><path d="M2.5 0.5 H6.5 V4.5" fill="none" stroke="#555"/></svg>
<div style="position:absolute;left:1854px;top:147px;width:11px;height:11px;border:1px solid #555;border-radius:2px;box-sizing:border-box"></div>
<svg style="position:absolute;left:1856px;top:149px;" width="7" height="7" viewBox="0 0 7 7"><path d="M0.5 0.5 L6.5 6.5 M6.5 0.5 L0.5 6.5" stroke="#333" stroke-width="1.6"/></svg>
<div style="position:absolute;left:1405px;top:164px;width:460px;height:25px;background:linear-gradient(#fafafa,#ececec);border:1px solid #b4b4b4;border-radius:3px;box-sizing:border-box"></div>
<div class="t" style="left:1431px;top:169.1px;font-size:13.5px;line-height:16px;color:#1a1a1a;font-weight:normal;letter-spacing:0.45px;">stompcovidph_provinces</div>
<svg style="position:absolute;left:1851px;top:174.5px;" width="8" height="5" viewBox="0 0 8 5"><path d="M0 0 H8 L4 4.5Z" fill="#333"/></svg>
<svg style="position:absolute;left:1411px;top:168px;" width="18" height="16" viewBox="0 0 18 16"><path d="M2 4 Q5 1 9 4 Q13 2 15 4 Q17 8 15 11 Q12 12 9 10 Q5 13 3 14 Q0 9 2 4Z" fill="#dedede" stroke="#999" stroke-width="0.9"/></svg>
<div style="position:absolute;left:1446px;top:195px;width:419px;height:25px;background:linear-gradient(#fafafa,#ececec);border:1px solid #b4b4b4;border-radius:3px;box-sizing:border-box"></div>
<div class="t" style="left:1475px;top:200.1px;font-size:13.5px;line-height:16px;color:#1a1a1a;font-weight:normal;letter-spacing:0.45px;">Single symbol</div>
<svg style="position:absolute;left:1851px;top:205.5px;" width="8" height="5" viewBox="0 0 8 5"><path d="M0 0 H8 L4 4.5Z" fill="#333"/></svg>
<svg style="position:absolute;left:1454px;top:200px;" width="14" height="16" viewBox="0 0 14 16"><rect x="1" y="0.5" width="9" height="3.5" rx="1" fill="#1aa050" stroke="#0e6a30" stroke-width="0.6"/><rect x="1" y="5.5" width="12" height="4" rx="1" fill="#1aa050" stroke="#0e6a30" stroke-width="0.6"/><rect x="1" y="11" width="10" height="3.5" rx="1" fill="#1aa050" stroke="#0e6a30" stroke-width="0.6"/></svg>
<svg style="position:absolute;left:1410px;top:197px;" width="24" height="22" viewBox="0 0 24 22"><path d="M2 12 L11 8 L14 16 L5 19Z" fill="#e44"/><path d="M2 10 L11 6 L13 12 L4 15Z" fill="#7ac"/><path d="M3 8 L12 4 L14 10 L5 13Z" fill="#fd4"/><path d="M10 12 L21 2" stroke="#c8a060" stroke-width="2.5"/><path d="M7 11 L13 9 L15 16 L9 18Z" fill="#bba070"/></svg>
<svg style="position:absolute;left:1399px;top:569px;" width="1" height="17" viewBox="0 0 1 17"><rect x="0" y="0" width="1" height="1" fill="#b8b8b8"/><rect x="0" y="3" width="1" height="1" fill="#b8b8b8"/><rect x="0" y="6" width="1" height="1" fill="#b8b8b8"/><rect x="0" y="9" width="1" height="1" fill="#b8b8b8"/><rect x="0" y="12" width="1" height="1" fill="#b8b8b8"/><rect x="0" y="15" width="1" height="1" fill="#b8b8b8"/></svg>
<div style="position:absolute;left:1405px;top:227px;width:38px;height:780px;background:#5e5e5e"></div>
<svg style="position:absolute;left:1409px;top:231px;" width="24" height="24" viewBox="0 0 24 24"><path d="M1 12 L5 7 H22 V17 H5Z" fill="#f7d84a" stroke="#a08a10"/><text x="13.5" y="15.5" font-size="9" font-weight="bold" text-anchor="middle" font-family="Liberation Sans" fill="#333">abc</text></svg>
<svg style="position:absolute;left:1409px;top:262px;" width="24" height="24" viewBox="0 0 24 24"><rect x="1" y="6" width="22" height="12" rx="6" fill="#fff"/><text x="12" y="16" font-size="10.5" font-weight="bold" text-anchor="middle" font-family="Liberation Sans" fill="#333">abc</text></svg>
<svg style="position:absolute;left:1409px;top:295px;" width="24" height="24" viewBox="0 0 24 24"><path d="M12 2 L21 7 L12 12 L3 7Z" fill="#ee5555" stroke="#822" stroke-width="0.8"/><path d="M3 7 L12 12 V22 L3 17Z" fill="#77cc33" stroke="#462" stroke-width="0.8"/><path d="M21 7 L12 12 V22 L21 17Z" fill="#f5e04a" stroke="#862" stroke-width="0.8"/></svg>
<svg style="position:absolute;left:1409px;top:327px;" width="24" height="24" viewBox="0 0 24 24"><rect x="8" y="1" width="8" height="6" fill="#e55"/><path d="M12 7 V11 M5 11 H19 M5 11 V16 M19 11 V16 M10 7 V16 M14 7 V16" stroke="#c8a040" stroke-width="1.5"/><rect x="1" y="16" width="8" height="7" fill="#f7e04a"/><rect x="14" y="16" width="9" height="7" fill="#7ab0e0"/></svg>
<svg style="position:absolute;left:1409px;top:359px;" width="24" height="24" viewBox="0 0 24 24"><path d="M3 8 Q6 2 12 5 L13 2 L16 8 L10 9 L11 7 Q7 5 5 9Z" fill="#3a9a5a"/><path d="M21 16 Q18 22 12 19 L11 22 L8 16 L14 15 L13 17 Q17 19 19 15Z" fill="#e07a2a"/></svg>
<div style="position:absolute;left:1466px;top:261px;width:62px;height:61px;background:#ffffb2;border:1px solid #222;box-sizing:border-box"></div>
<div style="position:absolute;left:1552px;top:231px;width:245px;height:119px;background:#fff;border:1px solid #b0b0b0;box-sizing:border-box"></div>
<div style="position:absolute;left:1553px;top:232px;width:243px;height:18px;background:#308cc6"></div>
<svg style="position:absolute;left:1558px;top:238px;" width="8" height="5" viewBox="0 0 8 5"><path d="M0 0 H8 L4 4.5Z" fill="#222"/></svg>
<div style="position:absolute;left:1575px;top:233px;width:15px;height:16px;background:#c3dcb6;border:1px solid #7a8a70;box-sizing:border-box"></div>
<div class="t" style="left:1597px;top:233.6px;font-size:13.5px;line-height:16px;color:#fff;font-weight:bold;letter-spacing:0.3px;">Fill</div>
<div style="position:absolute;left:1595px;top:252px;width:16px;height:16px;background:#ffffb2;border:1px solid #666;box-sizing:border-box"></div>
<div class="t" style="left:1617px;top:252.6px;font-size:13.5px;line-height:16px;color:#1a1a1a;font-weight:normal;letter-spacing:0.45px;">Simple fill</div>
<div style="position:absolute;left:1803px;top:226px;width:28px;height:24px;background:linear-gradient(#f8f8f8,#ececec);border:1px solid #bcbcbc;border-radius:3px;box-sizing:border-box"></div>
<svg style="position:absolute;left:1803px;top:226px;" width="28" height="24" viewBox="0 0 28 24"><path d="M11 6 H17 V10 H21 V15 H17 V19 H11 V15 H7 V10 H11Z" fill="#d8f0d8" stroke="#2a7a2a" stroke-width="1.3"/></svg>
<div style="position:absolute;left:1837px;top:226px;width:28px;height:24px;background:linear-gradient(#f8f8f8,#ececec);border:1px solid #bcbcbc;border-radius:3px;box-sizing:border-box"></div>
<svg style="position:absolute;left:1837px;top:226px;" width="28" height="24" viewBox="0 0 28 24"><path d="M6 17 L14 7 L22 17Z" fill="#d8d8d8"/></svg>
<div style="position:absolute;left:1803px;top:254px;width:28px;height:24px;background:linear-gradient(#f8f8f8,#ececec);border:1px solid #bcbcbc;border-radius:3px;box-sizing:border-box"></div>
<svg style="position:absolute;left:1803px;top:254px;" width="28" height="24" viewBox="0 0 28 24"><rect x="8" y="10" width="12" height="4" fill="#f8e8e8" stroke="#dbb"/></svg>
<div style="position:absolute;left:1837px;top:254px;width:28px;height:24px;background:linear-gradient(#f8f8f8,#ececec);border:1px solid #bcbcbc;border-radius:3px;box-sizing:border-box"></div>
<svg style="position:absolute;left:1837px;top:254px;" width="28" height="24" viewBox="0 0 28 24"><path d="M6 7 L14 17 L22 7Z" fill="#d8d8d8"/></svg>
<div style="position:absolute;left:1803px;top:282px;width:28px;height:24px;background:linear-gradient(#f8f8f8,#ececec);border:1px solid #bcbcbc;border-radius:3px;box-sizing:border-box"></div>
<svg style="position:absolute;left:1803px;top:282px;" width="28" height="24" viewBox="0 0 28 24"><rect x="7" y="6" width="13" height="13" fill="none" stroke="#ccc"/><rect x="13" y="12" width="6" height="6" fill="#ddd"/></svg>
<div style="position:absolute;left:1837px;top:282px;width:28px;height:24px;background:linear-gradient(#f8f8f8,#ececec);border:1px solid #bcbcbc;border-radius:3px;box-sizing:border-box"></div>
<svg style="position:absolute;left:1837px;top:282px;" width="28" height="24" viewBox="0 0 28 24"><rect x="8" y="12" width="12" height="8" rx="1" fill="#d6d2c4"/><path d="M10 12 V9 Q10 5 14 5 Q18 5 18 8" fill="none" stroke="#d6d2c4" stroke-width="2"/></svg>
<div style="position:absolute;left:1446px;top:361px;width:419px;height:1px;background:#b8b8b8"></div>
<div class="t" style="left:1446px;top:375.6px;font-size:13.5px;line-height:16px;color:#1a1a1a;font-weight:normal;letter-spacing:0.45px;">Unit</div>
<div style="position:absolute;left:1497px;top:371px;width:359px;height:25px;background:linear-gradient(#fafafa,#ececec);border:1px solid #b4b4b4;border-radius:3px;box-sizing:border-box"></div>
<div class="t" style="left:1500px;top:376.1px;font-size:13.5px;line-height:16px;color:#1a1a1a;font-weight:normal;letter-spacing:0.45px;">Millimeters</div>
<svg style="position:absolute;left:1842px;top:381.5px;" width="8" height="5" viewBox="0 0 8 5"><path d="M0 0 H8 L4 4.5Z" fill="#333"/></svg>
<div class="t" style="left:1446px;top:400.6px;font-size:13.5px;line-height:16px;color:#1a1a1a;font-weight:normal;letter-spacing:0.45px;">Opacity</div>
<div style="position:absolute;left:1497px;top:405px;width:250px;height:5px;background:#308cc6;border:1px solid #1f5f90;border-radius:2px;box-sizing:border-box"></div>
<div style="position:absolute;left:1738px;top:399px;width:14px;height:18px;background:linear-gradient(#fff,#eee);border:1px solid #aaa;border-radius:3px;box-sizing:border-box"></div>
<div style="position:absolute;left:1756px;top:398px;width:100px;height:22px;background:#fff;border:1px solid #b4b4b4;border-radius:2px;box-sizing:border-box"></div>
<div style="position:absolute;left:1839px;top:399px;width:1px;height:20px;background:#ccc"></div>
<div class="t" style="left:1762px;top:401.1px;font-size:13.5px;line-height:16px;color:#1a1a1a;font-weight:normal;letter-spacing:0.45px;">100.0 %</div>
<svg style="position:absolute;left:1843px;top:401px;" width="9" height="16" viewBox="0 0 9 16"><path d="M0.5 5 L4.5 1 L8.5 5Z" fill="#555"/><path d="M0.5 11 L4.5 15 L8.5 11Z" fill="#555"/></svg>
<div class="t" style="left:1446px;top:427.6px;font-size:13.5px;line-height:16px;color:#1a1a1a;font-weight:normal;letter-spacing:0.45px;">Color</div>
<div style="position:absolute;left:1497px;top:422px;width:359px;height:26px;background:linear-gradient(#fafafa,#ececec);border:1px solid #b4b4b4;border-radius:3px;box-sizing:border-box"></div>
<div style="position:absolute;left:1501px;top:427px;width:339px;height:16px;background:#ffffb2;border-radius:2px"></div>
<div style="position:absolute;left:1843px;top:423px;width:1px;height:24px;background:#bbb"></div>
<svg style="position:absolute;left:1846px;top:433px;" width="8" height="5" viewBox="0 0 8 5"><path d="M0 0 H8 L4 4.5Z" fill="#333"/></svg>
<div style="position:absolute;left:1446px;top:515px;width:410px;height:1px;background:#b8b8b8"></div>
<div style="position:absolute;left:1446px;top:523px;width:380px;height:24px;background:#fff;border:1px solid #b4b4b4;border-radius:3px;box-sizing:border-box"></div>
<svg style="position:absolute;left:1456px;top:527px;" width="16" height="16" viewBox="0 0 16 16"><circle cx="6.5" cy="6.5" r="4.5" fill="none" stroke="#777" stroke-width="1.4"/><path d="M10 10 L14 14" stroke="#777" stroke-width="1.6"/></svg>
<div class="t" style="left:1476px;top:527.6px;font-size:13.5px;line-height:16px;color:#1a1a1a;font-weight:normal;letter-spacing:0.45px;">dormido_markers</div>
<svg style="position:absolute;left:1782px;top:529px;" width="14" height="12" viewBox="0 0 14 12"><path d="M0 6 L4 1 H14 V11 H4Z" fill="#999"/><path d="M6.5 3.5 L11 8.5 M11 3.5 L6.5 8.5" stroke="#fff" stroke-width="1.3"/></svg>
<div style="position:absolute;left:1805px;top:524px;width:1px;height:22px;background:#ccc"></div>
<svg style="position:absolute;left:1810px;top:533px;" width="8" height="5" viewBox="0 0 8 5"><path d="M0 0 H8 L4 4.5Z" fill="#333"/></svg>
<svg style="position:absolute;left:1835px;top:527px;" width="18" height="18" viewBox="0 0 18 18"><circle cx="4" cy="5" r="3.5" fill="#d85a2a"/><rect x="1" y="10" width="6" height="6" fill="#5aaa6a"/><path d="M10 8 L16 2" stroke="#2a5aa0" stroke-width="1.6"/><text x="9" y="16" font-size="9" font-family="Liberation Sans" fill="#333">a</text></svg>
<div style="position:absolute;left:1446px;top:552px;width:410px;height:355px;background:#fff;border:1px solid #b0b0b0;box-sizing:border-box"></div>
<svg style="position:absolute;left:1477px;top:574px;" width="62" height="53" viewBox="0 0 62 53"><defs><clipPath id="thc"><rect x="0" y="0" width="62" height="53"/></clipPath></defs><g clip-path="url(#thc)"><rect width="62" height="53" fill="#fff"/><circle cx="60" cy="3" r="9.0" fill="#fff" stroke="#1a1a1a" stroke-width="1.4"/><circle cx="60" cy="3" r="5.9" fill="#fff" stroke="#1a1a1a" stroke-width="1.4"/><circle cx="60" cy="3" r="2.8" fill="#fff" stroke="#1a1a1a" stroke-width="1.4"/><circle cx="28" cy="2" r="8.0" fill="#fff" stroke="#1a1a1a" stroke-width="1.4"/><circle cx="28" cy="2" r="4.9" fill="#fff" stroke="#1a1a1a" stroke-width="1.4"/><circle cx="28" cy="2" r="1.8" fill="#fff" stroke="#1a1a1a" stroke-width="1.4"/><circle cx="5" cy="10" r="8.0" fill="#fff" stroke="#1a1a1a" stroke-width="1.4"/><circle cx="5" cy="10" r="4.9" fill="#fff" stroke="#1a1a1a" stroke-width="1.4"/><circle cx="5" cy="10" r="1.8" fill="#fff" stroke="#1a1a1a" stroke-width="1.4"/><circle cx="58" cy="36" r="8.0" fill="#fff" stroke="#1a1a1a" stroke-width="1.4"/><circle cx="58" cy="36" r="4.9" fill="#fff" stroke="#1a1a1a" stroke-width="1.4"/><circle cx="58" cy="36" r="1.8" fill="#fff" stroke="#1a1a1a" stroke-width="1.4"/><circle cx="30" cy="40" r="9.0" fill="#fff" stroke="#1a1a1a" stroke-width="1.4"/><circle cx="30" cy="40" r="5.9" fill="#fff" stroke="#1a1a1a" stroke-width="1.4"/><circle cx="30" cy="40" r="2.8" fill="#fff" stroke="#1a1a1a" stroke-width="1.4"/><circle cx="19" cy="9.4" r="10.0" fill="#fff" stroke="#1a1a1a" stroke-width="1.4"/><circle cx="19" cy="9.4" r="6.9" fill="#fff" stroke="#1a1a1a" stroke-width="1.4"/><circle cx="19" cy="9.4" r="3.8" fill="#fff" stroke="#1a1a1a" stroke-width="1.4"/><circle cx="20.4" cy="31.4" r="9.0" fill="#fff" stroke="#1a1a1a" stroke-width="1.4"/><circle cx="20.4" cy="31.4" r="5.9" fill="#fff" stroke="#1a1a1a" stroke-width="1.4"/><circle cx="20.4" cy="31.4" r="2.8" fill="#fff" stroke="#1a1a1a" stroke-width="1.4"/><circle cx="48.3" cy="13.3" r="10.5" fill="#fff" stroke="#1a1a1a" stroke-width="1.4"/><circle cx="48.3" cy="13.3" r="7.4" fill="#fff" stroke="#1a1a1a" stroke-width="1.4"/><circle cx="48.3" cy="13.3" r="4.3" fill="#fff" stroke="#1a1a1a" stroke-width="1.4"/><circle cx="3" cy="43" r="10.0" fill="#fff" stroke="#1a1a1a" stroke-width="1.4"/><circle cx="3" cy="43" r="6.9" fill="#fff" stroke="#1a1a1a" stroke-width="1.4"/><circle cx="3" cy="43" r="3.8" fill="#fff" stroke="#1a1a1a" stroke-width="1.4"/><circle cx="17.8" cy="46" r="8.0" fill="#fff" stroke="#1a1a1a" stroke-width="1.4"/><circle cx="17.8" cy="46" r="4.9" fill="#fff" stroke="#1a1a1a" stroke-width="1.4"/><circle cx="17.8" cy="46" r="1.8" fill="#fff" stroke="#1a1a1a" stroke-width="1.4"/><circle cx="13.3" cy="18.8" r="11.7" fill="#fff" stroke="#1a1a1a" stroke-width="1.4"/><circle cx="13.3" cy="18.8" r="8.6" fill="#fff" stroke="#1a1a1a" stroke-width="1.4"/><circle cx="13.3" cy="18.8" r="5.5" fill="#fff" stroke="#1a1a1a" stroke-width="1.4"/><circle cx="13.3" cy="18.8" r="2.4" fill="#fff" stroke="#1a1a1a" stroke-width="1.4"/><circle cx="38.6" cy="25" r="10.5" fill="#fff" stroke="#1a1a1a" stroke-width="1.4"/><circle cx="38.6" cy="25" r="7.4" fill="#fff" stroke="#1a1a1a" stroke-width="1.4"/><circle cx="38.6" cy="25" r="4.3" fill="#fff" stroke="#1a1a1a" stroke-width="1.4"/><circle cx="47.6" cy="47" r="10.5" fill="#fff" stroke="#1a1a1a" stroke-width="1.4"/><circle cx="47.6" cy="47" r="7.4" fill="#fff" stroke="#1a1a1a" stroke-width="1.4"/><circle cx="47.6" cy="47" r="4.3" fill="#fff" stroke="#1a1a1a" stroke-width="1.4"/></g><rect x="0.5" y="0.5" width="61" height="52" fill="none" stroke="#bbb"/></svg>
<div class="t" style="left:1455px;top:641.6px;font-size:13.5px;line-height:16px;color:#1a1a1a;font-weight:normal;letter-spacing:0.45px;">dormido_markers</div>
<div style="position:absolute;left:1446px;top:912px;width:24px;height:24px;background:#dedede;border:1px solid #bcbcbc;border-radius:3px;box-sizing:border-box"></div>
<svg style="position:absolute;left:1450px;top:916px;" width="16" height="16" viewBox="0 0 16 16"><rect x="2.0" y="2.0" width="2.5" height="2.5" fill="#4a80c0"/><rect x="2.0" y="6.5" width="2.5" height="2.5" fill="#4a80c0"/><rect x="2.0" y="11.0" width="2.5" height="2.5" fill="#4a80c0"/><rect x="6.5" y="2.0" width="2.5" height="2.5" fill="#4a80c0"/><rect x="6.5" y="6.5" width="2.5" height="2.5" fill="#4a80c0"/><rect x="6.5" y="11.0" width="2.5" height="2.5" fill="#4a80c0"/><rect x="11.0" y="2.0" width="2.5" height="2.5" fill="#4a80c0"/><rect x="11.0" y="6.5" width="2.5" height="2.5" fill="#4a80c0"/><rect x="11.0" y="11.0" width="2.5" height="2.5" fill="#4a80c0"/><rect x="0.5" y="0.5" width="15" height="15" fill="none" stroke="#9ab8dc"/></svg>
<svg style="position:absolute;left:1475px;top:916px;" width="16" height="16" viewBox="0 0 16 16"><rect x="0.5" y="0.5" width="14" height="14" fill="#eaf2fb" stroke="#6a9ad0"/><rect x="0.5" y="0.5" width="14" height="3" fill="#9ab8dc"/><path d="M3 6.5 H12 M3 9 H12 M3 11.5 H12" stroke="#6a9ad0"/></svg>
<div style="position:absolute;left:1659px;top:912px;width:105px;height:25px;background:linear-gradient(#f8f8f8,#ececec);border:1px solid #bcbcbc;border-radius:3px;box-sizing:border-box"></div>
<div class="t" style="left:1663px;top:916.6px;font-size:13.5px;line-height:16px;color:#1a1a1a;font-weight:normal;letter-spacing:0.45px;">Save Symbol...</div>
<div style="position:absolute;left:1771px;top:912px;width:85px;height:25px;background:linear-gradient(#f8f8f8,#ececec);border:1px solid #bcbcbc;border-radius:3px;box-sizing:border-box"></div>
<div class="t" style="left:1775px;top:916.6px;font-size:13.5px;line-height:16px;color:#1a1a1a;font-weight:normal;letter-spacing:0.45px;">Advanced</div>
<svg style="position:absolute;left:1843px;top:922px;" width="6" height="4" viewBox="0 0 6 4"><path d="M0 0 H6 L3 3.5Z" fill="#555"/></svg>
<svg style="position:absolute;left:1450px;top:961px;" width="10" height="12" viewBox="0 0 10 12"><path d="M1 0 L9 6 L1 12Z" fill="#111"/></svg>
<div class="t" style="left:1468px;top:959.6px;font-size:13.5px;line-height:16px;color:#111;font-weight:bold;letter-spacing:0.95px;">Layer Rendering</div>
<div style="position:absolute;left:1446px;top:983px;width:24px;height:24px;background:linear-gradient(#f8f8f8,#ececec);border:1px solid #bcbcbc;border-radius:3px;box-sizing:border-box"></div>
<svg style="position:absolute;left:1446px;top:983px;" width="24" height="24" viewBox="0 0 24 24"><path d="M6 11 L11 6 V9 Q18 9 18 15 Q18 19 14 20 Q16 17 15 14 Q13 12 11 13 V16Z" fill="#e07a2a"/></svg>
<div style="position:absolute;left:1475px;top:983px;width:24px;height:24px;background:linear-gradient(#f8f8f8,#ececec);border:1px solid #bcbcbc;border-radius:3px;box-sizing:border-box"></div>
<svg style="position:absolute;left:1475px;top:983px;" width="24" height="24" viewBox="0 0 24 24"><path d="M18 11 L13 6 V9 Q6 9 6 15 Q6 19 10 20 Q8 17 9 14 Q11 12 13 13 V16Z" fill="#3a9a4a"/></svg>
<div style="position:absolute;left:1677px;top:987px;width:14px;height:14px;background:#fff;border:1px solid #888;box-sizing:border-box"></div>
<svg style="position:absolute;left:1679px;top:989px;" width="10" height="10" viewBox="0 0 10 10"><path d="M1 5 L4 9 L9 1" stroke="#000" stroke-width="1.6" fill="none"/></svg>
<div class="t" style="left:1696px;top:987.1px;font-size:13.5px;line-height:16px;color:#1a1a1a;font-weight:normal;letter-spacing:0.45px;">Live update</div>
<div style="position:absolute;left:1785px;top:982px;width:80px;height:26px;background:linear-gradient(#f8f8f8,#ececec);border:1px solid #bcbcbc;border-radius:3px;box-sizing:border-box"></div>
<svg style="position:absolute;left:1797px;top:985px;" width="16" height="18" viewBox="0 0 16 18"><path d="M1 10 L5 9 L7 13 Q10 5 15 1 Q11 8 8 17 L6 17Z" fill="#4a8a4a"/></svg>
<div class="t" style="left:1814px;top:987.6px;font-size:13.5px;line-height:16px;color:#1a1a1a;font-weight:normal;letter-spacing:0.45px;">Apply</div>
<div style="position:absolute;left:1868px;top:141px;width:52px;height:869px;background:linear-gradient(90deg,#f3f3f3,#ececec)"></div>
<div style="position:absolute;left:1868px;top:141px;width:1px;height:869px;background:#d4d4d4"></div>
<svg style="position:absolute;left:1885px;top:147px;" width="20" height="4" viewBox="0 0 20 4"><rect x="0" y="0" width="1" height="1" fill="#bdbdbd"/><rect x="0" y="3" width="1" height="1" fill="#bdbdbd"/><rect x="3" y="0" width="1" height="1" fill="#bdbdbd"/><rect x="3" y="3" width="1" height="1" fill="#bdbdbd"/><rect x="6" y="0" width="1" height="1" fill="#bdbdbd"/><rect x="6" y="3" width="1" height="1" fill="#bdbdbd"/><rect x="9" y="0" width="1" height="1" fill="#bdbdbd"/><rect x="9" y="3" width="1" height="1" fill="#bdbdbd"/><rect x="12" y="0" width="1" height="1" fill="#bdbdbd"/><rect x="12" y="3" width="1" height="1" fill="#bdbdbd"/><rect x="15" y="0" width="1" height="1" fill="#bdbdbd"/><rect x="15" y="3" width="1" height="1" fill="#bdbdbd"/></svg>
<svg style="position:absolute;left:1876px;top:152px;" width="30" height="32" viewBox="0 0 30 32"><rect x="22.4" y="7.1" width="6.1" height="21.7" fill="#ecebe4" stroke="#cbc6bc"/><path d="M22.9 12 H27 M24 15 H27 M22.9 18 H27 M24 21 H27 M22.9 24 H27" stroke="#cbc6bc" stroke-width="0.8"/><path d="M6.5 6.5 V29.5 H29.2Z" fill="#e6e0da" stroke="#c8c2ba" stroke-width="1.2"/><path d="M11.3 18.8 V24.3 H17.2Z" fill="#f8f8f8" stroke="#c8c2ba"/></svg>
<svg style="position:absolute;left:1877px;top:190px;" width="24" height="24" viewBox="0 0 24 24"><path d="M1.5 7 Q1.5 1 8 1.5 Q13 2.5 17 1.5 Q22.5 1.5 22.5 7 Q22.5 12.5 17 12 Q12 11 7 12.5 Q1.5 13 1.5 7Z" fill="#dedede" stroke="#c6c6c6" stroke-width="1.2"/><rect x="12.5" y="13" width="11" height="11" rx="2" fill="#c8c8c8"/><path d="M14.5 18.5 H20 M18 15.5 L21 18.5 L18 21.5" stroke="#fff" stroke-width="2" fill="none"/></svg>
<svg style="position:absolute;left:1882px;top:222px;" width="24" height="24" viewBox="0 0 24 24"><path d="M1.5 7 Q1.5 1 8 1.5 Q13 2.5 17 1.5 Q22.5 1.5 22.5 7 Q22.5 12.5 17 12 Q12 11 7 12.5 Q1.5 13 1.5 7Z" fill="#dedede" stroke="#c6c6c6" stroke-width="1.2"/><rect x="12.5" y="13" width="11" height="11" rx="2" fill="#c8c8c8"/><circle cx="18" cy="18.5" r="2.8" fill="none" stroke="#fff" stroke-width="1.5"/></svg>
<svg style="position:absolute;left:1882px;top:254px;" width="24" height="24" viewBox="0 0 24 24"><path d="M1.5 7 Q1.5 1 8 1.5 Q13 2.5 17 1.5 Q22.5 1.5 22.5 7 Q22.5 12.5 17 12 Q12 11 7 12.5 Q1.5 13 1.5 7Z" fill="#dedede" stroke="#c6c6c6" stroke-width="1.2"/><path d="M13 9 L19 8 L23 15 L19 22 L13 22 L9 15Z" fill="#e2e2e2" stroke="#c6c6c6"/><path d="M8 10 L15 16" stroke="#bbb"/></svg>
<svg style="position:absolute;left:1882px;top:286px;" width="24" height="24" viewBox="0 0 24 24"><path d="M1.5 7 Q1.5 1 8 1.5 Q13 2.5 17 1.5 Q22.5 1.5 22.5 7 Q22.5 12.5 17 12 Q12 11 7 12.5 Q1.5 13 1.5 7Z" fill="#dedede" stroke="#c6c6c6" stroke-width="1.2"/><rect x="12.5" y="13" width="11" height="11" rx="2" fill="#d2cec0"/><circle cx="18" cy="18.5" r="1.30" fill="none" stroke="#fff" stroke-width="1"/><path d="M19.12 19.15 L20.49 19.94 M18.00 19.80 L18.00 21.38 M16.88 19.15 L15.51 19.94 M16.88 17.85 L15.51 17.06 M18.00 17.20 L18.00 15.62 M19.12 17.85 L20.49 17.06" stroke="#fff" stroke-width="1.2"/><ellipse cx="8" cy="7" rx="4" ry="2.5" fill="#f0f0f0" stroke="#c6c6c6"/></svg>
<svg style="position:absolute;left:1882px;top:318px;" width="24" height="24" viewBox="0 0 24 24"><path d="M1.5 7 Q1.5 1 8 1.5 Q13 2.5 17 1.5 Q22.5 1.5 22.5 7 Q22.5 12.5 17 12 Q12 11 7 12.5 Q1.5 13 1.5 7Z" fill="#dedede" stroke="#c6c6c6" stroke-width="1.2"/><rect x="12.5" y="13" width="11" height="11" rx="2" fill="#d2cec0"/><circle cx="18" cy="18.5" r="1.30" fill="none" stroke="#fff" stroke-width="1"/><path d="M19.12 19.15 L20.49 19.94 M18.00 19.80 L18.00 21.38 M16.88 19.15 L15.51 19.94 M16.88 17.85 L15.51 17.06 M18.00 17.20 L18.00 15.62 M19.12 17.85 L20.49 17.06" stroke="#fff" stroke-width="1.2"/><path d="M2 22 Q2 15 9 14 Q9 20 2 22Z" fill="#dedede"/></svg>
<svg style="position:absolute;left:1882px;top:350px;" width="24" height="24" viewBox="0 0 24 24"><path d="M1.5 7 Q1.5 1 8 1.5 Q13 2.5 17 1.5 Q22.5 1.5 22.5 7 Q22.5 12.5 17 12 Q12 11 7 12.5 Q1.5 13 1.5 7Z" fill="#dedede" stroke="#c6c6c6" stroke-width="1.2"/><rect x="12.5" y="13" width="11" height="11" rx="2" fill="#d2cec0"/><circle cx="18" cy="18.5" r="1.30" fill="none" stroke="#fff" stroke-width="1"/><path d="M19.12 19.15 L20.49 19.94 M18.00 19.80 L18.00 21.38 M16.88 19.15 L15.51 19.94 M16.88 17.85 L15.51 17.06 M18.00 17.20 L18.00 15.62 M19.12 17.85 L20.49 17.06" stroke="#fff" stroke-width="1.2"/><ellipse cx="8" cy="7" rx="4" ry="2.5" fill="#f0f0f0" stroke="#c6c6c6"/></svg>
<svg style="position:absolute;left:1882px;top:382px;" width="24" height="24" viewBox="0 0 24 24"><path d="M1.5 7 Q1.5 1 8 1.5 Q13 2.5 17 1.5 Q22.5 1.5 22.5 7 Q22.5 12.5 17 12 Q12 11 7 12.5 Q1.5 13 1.5 7Z" fill="#dedede" stroke="#c6c6c6" stroke-width="1.2"/><rect x="12.5" y="13" width="11" height="11" rx="2" fill="#e8e0e0"/><path d="M15 15.5 L21 21.5 M21 15.5 L15 21.5" stroke="#fff" stroke-width="2"/><ellipse cx="8" cy="7" rx="4" ry="2.5" fill="#f0f0f0" stroke="#c6c6c6"/></svg>
<svg style="position:absolute;left:1882px;top:414px;" width="24" height="24" viewBox="0 0 24 24"><path d="M1.5 7 Q1.5 1 8 1.5 Q13 2.5 17 1.5 Q22.5 1.5 22.5 7 Q22.5 12.5 17 12 Q12 11 7 12.5 Q1.5 13 1.5 7Z" fill="#dedede" stroke="#c6c6c6" stroke-width="1.2"/><rect x="12.5" y="13" width="11" height="11" rx="2" fill="#e8e0e0"/><path d="M15 15.5 L21 21.5 M21 15.5 L15 21.5" stroke="#fff" stroke-width="2"/><path d="M2 22 Q2 15 9 14 Q9 20 2 22Z" fill="#dedede"/></svg>
<svg style="position:absolute;left:1906px;top:200px;" width="8" height="5" viewBox="0 0 8 5"><path d="M0 0 H8 L4 4.5Z" fill="#c8c8c8"/></svg>
<svg style="position:absolute;left:1882px;top:446px;" width="24" height="24" viewBox="0 0 24 24"><path d="M3 8 Q4 2 12 3 Q21 3 20 8 Q14 9 12 14 Q10 22 5 20 Q2 14 3 8Z" fill="#e2e2e2" stroke="#cfcfcf"/></svg>
<svg style="position:absolute;left:1882px;top:478px;" width="24" height="24" viewBox="0 0 24 24"><path d="M4 18 Q1 12 8 9 Q11 8 12 5 Q16 1 20 5 Q23 10 17 13 Q13 15 12 19 Q8 23 4 18Z" fill="#e2e2e2" stroke="#cfcfcf" stroke-width="1.3"/></svg>
<svg style="position:absolute;left:1882px;top:510px;" width="24" height="24" viewBox="0 0 24 24"><path d="M2 3 L8 14 L14 5 H20" stroke="#ccc" stroke-width="1.2" fill="none"/><rect x="13" y="13" width="9" height="9" rx="1" fill="none" stroke="#ccc"/></svg>
<svg style="position:absolute;left:1882px;top:542px;" width="24" height="24" viewBox="0 0 24 24"><path d="M12 1 V23 M3 13 H21" stroke="#ccc" stroke-width="1.3"/><rect x="9" y="10" width="6" height="6" fill="none" stroke="#ccc"/><rect x="17" y="3" width="5" height="5" fill="none" stroke="#ccc"/><rect x="2" y="17" width="5" height="5" fill="none" stroke="#ccc"/></svg>
<svg style="position:absolute;left:1882px;top:574px;" width="24" height="24" viewBox="0 0 24 24"><path d="M3 7 Q4 1 11 4 V14 Q4 15 3 7Z M13 4 Q20 1 21 7 Q20 15 13 14Z" fill="#e2e2e2" stroke="#cfcfcf"/><circle cx="9" cy="19" r="2.5" fill="none" stroke="#ccc"/><circle cx="15" cy="19" r="2.5" fill="none" stroke="#ccc"/><path d="M11 14 L14 17 M13 14 L10 17" stroke="#ccc"/></svg>
<svg style="position:absolute;left:1882px;top:606px;" width="24" height="24" viewBox="0 0 24 24"><path d="M3 7 Q4 1 11 4 V14 Q4 15 3 7Z M13 4 Q20 1 21 7 Q20 15 13 14Z" fill="#e2e2e2" stroke="#cfcfcf"/><circle cx="9" cy="19" r="2.5" fill="none" stroke="#ccc"/><circle cx="15" cy="19" r="2.5" fill="none" stroke="#ccc"/><path d="M11 14 L14 17 M13 14 L10 17" stroke="#ccc"/></svg>
<svg style="position:absolute;left:1882px;top:638px;" width="24" height="24" viewBox="0 0 24 24"><path d="M3 7 Q4 1 11 4 V14 Q4 15 3 7Z M13 4 Q20 1 21 7 Q20 15 13 14Z" fill="#e2e2e2" stroke="#cfcfcf"/><path d="M10 5 H15 M10 8 H15 M10 11 H15 M8 14 Q10 20 14 22" stroke="#ccc" fill="none"/></svg>
<svg style="position:absolute;left:1882px;top:670px;" width="24" height="24" viewBox="0 0 24 24"><path d="M3 4 H21 M3 9 H21 M3 14 H21 M3 19 H21 M10 2 V22 M14 6 V18" stroke="#d0d0d0"/></svg>
<svg style="position:absolute;left:1882px;top:702px;" width="24" height="24" viewBox="0 0 24 24"><path d="M8 20 L14 8 L20 20Z" fill="none" stroke="#ccc"/><path d="M14 2 V10 L22 6Z" fill="#ddd"/><path d="M10 4 Q2 10 8 18" stroke="#ccc" fill="none" stroke-width="1.3"/></svg>
<svg style="position:absolute;left:1908px;top:713px;" width="8" height="5" viewBox="0 0 8 5"><path d="M0 0 H8 L4 4.5Z" fill="#ccc"/></svg>
<div style="position:absolute;left:0px;top:1010px;width:1920px;height:38px;background:linear-gradient(#f6f6f6,#f0f0f0)"></div>
<div style="position:absolute;left:0px;top:1047px;width:1920px;height:1px;background:#cfcfcf"></div>
<div style="position:absolute;left:0px;top:1048px;width:1920px;height:32px;background:#efefef"></div>
<svg style="position:absolute;left:5px;top:1020px;" width="4" height="18" viewBox="0 0 4 18"><rect x="0" y="0" width="1" height="1" fill="#bdbdbd"/><rect x="3" y="0" width="1" height="1" fill="#bdbdbd"/><rect x="0" y="3" width="1" height="1" fill="#bdbdbd"/><rect x="3" y="3" width="1" height="1" fill="#bdbdbd"/><rect x="0" y="6" width="1" height="1" fill="#bdbdbd"/><rect x="3" y="6" width="1" height="1" fill="#bdbdbd"/><rect x="0" y="9" width="1" height="1" fill="#bdbdbd"/><rect x="3" y="9" width="1" height="1" fill="#bdbdbd"/><rect x="0" y="12" width="1" height="1" fill="#bdbdbd"/><rect x="3" y="12" width="1" height="1" fill="#bdbdbd"/><rect x="0" y="15" width="1" height="1" fill="#bdbdbd"/><rect x="3" y="15" width="1" height="1" fill="#bdbdbd"/></svg>
<div style="position:absolute;left:13px;top:1014px;width:32px;height:31px;background:#dcdcdc;border:1px solid #b8b8b8;border-radius:3px;box-sizing:border-box"></div>
<svg style="position:absolute;left:17px;top:1018px;" width="24" height="24" viewBox="0 0 24 24"><path d="M5 9 A8 8 0 0 0 19 17" fill="none" stroke="#d22" stroke-width="6"/><path d="M5 9 L2 6 M12 3 L10 0" stroke="#fff" stroke-width="2"/><rect x="2" y="5" width="6" height="5" fill="#ddd" transform="rotate(-40 5 7)"/><rect x="14" y="15" width="6" height="5" fill="#ddd" transform="rotate(-40 17 17)"/></svg>
<svg style="position:absolute;left:53px;top:1017px;" width="24" height="24" viewBox="0 0 24 24"><path d="M3 3 L8 14 L13 3 M8 14 V21 M13 8 H21 M13 3 H21" stroke="#7aba6a" stroke-width="1.5" fill="none"/><circle cx="8" cy="14" r="1.8" fill="#fff" stroke="#777"/><circle cx="13" cy="8" r="1.8" fill="#fff" stroke="#777"/><circle cx="21" cy="8" r="1.8" fill="#fff" stroke="#777"/><circle cx="21" cy="3" r="1.8" fill="#fff" stroke="#777"/><circle cx="8" cy="21" r="1.8" fill="#fff" stroke="#777"/></svg>
<svg style="position:absolute;left:70px;top:1041px;" width="8" height="5" viewBox="0 0 8 5"><path d="M0 0 H8 L4 4.5Z" fill="#444"/></svg>
<div style="position:absolute;left:79px;top:1014px;width:32px;height:31px;background:#dcdcdc;border:1px solid #b8b8b8;border-radius:3px;box-sizing:border-box"></div>
<svg style="position:absolute;left:85px;top:1020px;" width="20" height="20" viewBox="0 0 20 20"><rect x="3" y="3" width="3" height="3" fill="none" stroke="#777"/><rect x="13" y="5" width="3" height="3" fill="none" stroke="#777"/><rect x="8" y="13" width="3" height="3" fill="none" stroke="#777"/></svg>
<svg style="position:absolute;left:102px;top:1041px;" width="8" height="5" viewBox="0 0 8 5"><path d="M0 0 H8 L4 4.5Z" fill="#444"/></svg>
<div style="position:absolute;left:112px;top:1018px;width:103px;height:24px;background:#fff;border:1px solid #b4b4b4;border-radius:2px;box-sizing:border-box"></div>
<div style="position:absolute;left:199px;top:1019px;width:1px;height:22px;background:#ccc"></div>
<div class="t" style="left:119px;top:1022.1px;font-size:13.5px;line-height:16px;color:#1a1a1a;font-weight:normal;letter-spacing:0.45px;">2</div>
<svg style="position:absolute;left:203px;top:1022px;" width="9" height="16" viewBox="0 0 9 16"><path d="M0.5 5 L4.5 1 L8.5 5Z" fill="#555"/><path d="M0.5 11 L4.5 15 L8.5 11Z" fill="#555"/></svg>
<div style="position:absolute;left:216px;top:1017px;width:109px;height:25px;background:linear-gradient(#fafafa,#ececec);border:1px solid #b4b4b4;border-radius:3px;box-sizing:border-box"></div>
<div class="t" style="left:221px;top:1022.1px;font-size:13.5px;line-height:16px;color:#1a1a1a;font-weight:normal;letter-spacing:0.45px;">px</div>
<svg style="position:absolute;left:311px;top:1027.5px;" width="8" height="5" viewBox="0 0 8 5"><path d="M0 0 H8 L4 4.5Z" fill="#333"/></svg>
<svg style="position:absolute;left:331px;top:1017px;" width="24" height="24" viewBox="0 0 24 24"><path d="M2 6 L10 12 L22 6 M10 12 L9 23" stroke="#7aba6a" stroke-width="1.6" fill="none"/><rect x="8" y="10" width="4" height="4" fill="none" stroke="#777"/></svg>
<svg style="position:absolute;left:363px;top:1017px;" width="26" height="24" viewBox="0 0 26 24"><path d="M4 6 Q8 0 16 3 Q24 4 22 10 Q20 15 16 13 L14 20 Q10 24 7 20 Q2 12 4 6Z" fill="#999"/><path d="M3 8 Q6 2 10 5 Q14 9 12 16 Q11 23 7 21 Q2 15 3 8Z" fill="#7aba6a" stroke="#333" stroke-width="0.8"/></svg>
<svg style="position:absolute;left:380px;top:1040px;" width="8" height="5" viewBox="0 0 8 5"><path d="M0 0 H8 L4 4.5Z" fill="#444"/></svg>
<svg style="position:absolute;left:396px;top:1017px;" width="24" height="24" viewBox="0 0 24 24"><path d="M2 2 L22 22 M22 2 L2 22" stroke="#7aba6a" stroke-width="1.6"/><rect x="10" y="10" width="4" height="4" fill="none" stroke="#777"/></svg>
<svg style="position:absolute;left:429px;top:1017px;" width="24" height="24" viewBox="0 0 24 24"><path d="M2 22 L22 2" stroke="#7aba6a" stroke-width="1.6"/><path d="M4 8 L13 12 L11 6 L20 16 L11 13 L13 19Z" fill="#f5d020"/></svg>
<svg style="position:absolute;left:458px;top:1027px;" width="8" height="5" viewBox="0 0 8 5"><path d="M0 0 H8 L4 4.5Z" fill="#444"/></svg>
<svg style="position:absolute;left:473px;top:1017px;" width="24" height="24" viewBox="0 0 24 24"><path d="M3 21 L8 5 L16 14 M2 8 L22 2" stroke="#7aba6a" stroke-width="1.5" fill="none"/><circle cx="8" cy="5" r="2" fill="#fff" stroke="#777"/><circle cx="3" cy="21" r="2" fill="#fff" stroke="#777"/><path d="M14 14 L21 3 L23 5 L16 16Z" fill="#f5d020" stroke="#777" stroke-width="0.6"/></svg>
<svg style="position:absolute;left:512px;top:1020px;" width="4" height="18" viewBox="0 0 4 18"><rect x="0" y="0" width="1" height="1" fill="#bdbdbd"/><rect x="3" y="0" width="1" height="1" fill="#bdbdbd"/><rect x="0" y="3" width="1" height="1" fill="#bdbdbd"/><rect x="3" y="3" width="1" height="1" fill="#bdbdbd"/><rect x="0" y="6" width="1" height="1" fill="#bdbdbd"/><rect x="3" y="6" width="1" height="1" fill="#bdbdbd"/><rect x="0" y="9" width="1" height="1" fill="#bdbdbd"/><rect x="3" y="9" width="1" height="1" fill="#bdbdbd"/><rect x="0" y="12" width="1" height="1" fill="#bdbdbd"/><rect x="3" y="12" width="1" height="1" fill="#bdbdbd"/><rect x="0" y="15" width="1" height="1" fill="#bdbdbd"/><rect x="3" y="15" width="1" height="1" fill="#bdbdbd"/></svg>
<svg style="position:absolute;left:526px;top:1017px;" width="20" height="24" viewBox="0 0 20 24"><ellipse cx="10" cy="4" rx="8" ry="3" fill="#f5e9a0"/><path d="M2 4 V20 Q10 24 18 20 V4 Q10 8 2 4Z" fill="#e8c848"/></svg>
<svg style="position:absolute;left:557px;top:1017px;" width="24" height="24" viewBox="0 0 24 24"><path d="M2 1 H6 V19 H24 V23 H2Z" fill="#b04a2a"/><path d="M8 16 L13 3 L22 14Z" fill="none" stroke="#e8b020" stroke-width="2"/></svg>
<svg style="position:absolute;left:590px;top:1017px;" width="24" height="24" viewBox="0 0 24 24"><path d="M5 5 Q1 12 5 19 M19 5 Q23 12 19 19 M8 8 Q6 12 8 16 M16 8 Q18 12 16 16" stroke="#e8b800" stroke-width="2" fill="none"/><circle cx="12" cy="11" r="3" fill="#4a4"/><path d="M12 11 V22" stroke="#111" stroke-width="2.5"/></svg>
<svg style="position:absolute;left:624px;top:1017px;" width="24" height="24" viewBox="0 0 24 24"><path d="M1 16 L12 10 L23 16 L12 23Z" fill="#c8e060" stroke="#8a9a3a"/><path d="M12 16 Q6 8 8 5 A4.5 4.5 0 0 1 16 5 Q18 8 12 16Z" fill="#e23a1a"/></svg>
<svg style="position:absolute;left:661px;top:1020px;" width="4" height="18" viewBox="0 0 4 18"><rect x="0" y="0" width="1" height="1" fill="#bdbdbd"/><rect x="3" y="0" width="1" height="1" fill="#bdbdbd"/><rect x="0" y="3" width="1" height="1" fill="#bdbdbd"/><rect x="3" y="3" width="1" height="1" fill="#bdbdbd"/><rect x="0" y="6" width="1" height="1" fill="#bdbdbd"/><rect x="3" y="6" width="1" height="1" fill="#bdbdbd"/><rect x="0" y="9" width="1" height="1" fill="#bdbdbd"/><rect x="3" y="9" width="1" height="1" fill="#bdbdbd"/><rect x="0" y="12" width="1" height="1" fill="#bdbdbd"/><rect x="3" y="12" width="1" height="1" fill="#bdbdbd"/><rect x="0" y="15" width="1" height="1" fill="#bdbdbd"/><rect x="3" y="15" width="1" height="1" fill="#bdbdbd"/></svg>
<svg style="position:absolute;left:672px;top:1017px;" width="24" height="24" viewBox="0 0 24 24"><rect x="0" y="0" width="24" height="24" fill="#4aa83a"/><circle cx="13" cy="10" r="6.5" fill="none" stroke="#fff" stroke-width="2.2"/><path d="M8.5 14.5 L3 20" stroke="#fff" stroke-width="3"/></svg>
<svg style="position:absolute;left:705px;top:1017px;" width="24" height="24" viewBox="0 0 24 24"><rect x="0" y="0" width="22" height="24" fill="#f5d868"/><path d="M0 12 Q6 10 10 16 Q14 22 22 20 V24 H0Z" fill="#3a7ad0"/><path d="M4 0 V10 M14 0 Q12 8 18 10" stroke="#e05a5a" stroke-width="2" fill="none"/><path d="M6 20 L24 1" stroke="#8a4a1a" stroke-width="3"/></svg>
<svg style="position:absolute;left:744px;top:1020px;" width="4" height="18" viewBox="0 0 4 18"><rect x="0" y="0" width="1" height="1" fill="#bdbdbd"/><rect x="3" y="0" width="1" height="1" fill="#bdbdbd"/><rect x="0" y="3" width="1" height="1" fill="#bdbdbd"/><rect x="3" y="3" width="1" height="1" fill="#bdbdbd"/><rect x="0" y="6" width="1" height="1" fill="#bdbdbd"/><rect x="3" y="6" width="1" height="1" fill="#bdbdbd"/><rect x="0" y="9" width="1" height="1" fill="#bdbdbd"/><rect x="3" y="9" width="1" height="1" fill="#bdbdbd"/><rect x="0" y="12" width="1" height="1" fill="#bdbdbd"/><rect x="3" y="12" width="1" height="1" fill="#bdbdbd"/><rect x="0" y="15" width="1" height="1" fill="#bdbdbd"/><rect x="3" y="15" width="1" height="1" fill="#bdbdbd"/></svg>
<div style="position:absolute;left:754px;top:1017px;width:24px;height:24px;background:#ffc4cc"></div>
<div class="t" style="left:766.0px;top:1022.6px;font-size:12px;line-height:14px;color:#e82020;font-weight:normal;letter-spacing:0px;transform:translateX(-50%)">AD</div>
<div style="position:absolute;left:787px;top:1017px;width:24px;height:24px;background:#e8f0e8"></div>
<div class="t" style="left:799.0px;top:1022.6px;font-size:12px;line-height:14px;color:#d8e0d0;font-weight:normal;letter-spacing:0px;transform:translateX(-50%)">MO</div>
<div style="position:absolute;left:820px;top:1017px;width:24px;height:24px;background:#c8c0cc"></div>
<div class="t" style="left:832.0px;top:1022.6px;font-size:12px;line-height:14px;color:#f0eaf0;font-weight:normal;letter-spacing:0px;transform:translateX(-50%)">RO</div>
<div style="position:absolute;left:849px;top:1018px;width:70px;height:24px;background:#f0f0f0;border:1px solid #c8c8c8;border-radius:3px;box-sizing:border-box"></div>
<div style="position:absolute;left:903px;top:1019px;width:1px;height:22px;background:#ddd"></div>
<div class="t" style="left:855px;top:1022.1px;font-size:13.5px;line-height:16px;color:#b8b8b8;font-weight:normal;letter-spacing:0.45px;">0.0</div>
<svg style="position:absolute;left:907px;top:1022px;" width="9" height="16" viewBox="0 0 9 16"><path d="M0.5 5 L4.5 1 L8.5 5Z" fill="#bbb"/><path d="M0.5 11 L4.5 15 L8.5 11Z" fill="#bbb"/></svg>
<div style="position:absolute;left:924px;top:1017px;width:24px;height:24px;background:#dcdccc"></div>
<div class="t" style="left:936.0px;top:1022.6px;font-size:12px;line-height:14px;color:#ecece0;font-weight:normal;letter-spacing:0px;transform:translateX(-50%)">SC</div>
<div style="position:absolute;left:957px;top:1017px;width:24px;height:24px;background:#c8c0c8"></div>
<div class="t" style="left:969.0px;top:1022.6px;font-size:12px;line-height:14px;color:#f0eaf0;font-weight:normal;letter-spacing:0px;transform:translateX(-50%)">ADJ</div>
<div style="position:absolute;left:990px;top:1017px;width:24px;height:24px;background:#e0ece4"></div>
<div class="t" style="left:1002.0px;top:1022.6px;font-size:12px;line-height:14px;color:#e8d8dc;font-weight:normal;letter-spacing:0px;transform:translateX(-50%)">2P</div>
<div style="position:absolute;left:1023px;top:1017px;width:24px;height:24px;background:#f8f8f8"></div>
<div class="t" style="left:1035.0px;top:1022.6px;font-size:12px;line-height:14px;color:#bbb;font-weight:normal;letter-spacing:0px;transform:translateX(-50%)">T-</div>
<div style="position:absolute;left:1056px;top:1017px;width:24px;height:24px;background:#9c9c9c"></div>
<div class="t" style="left:1068.0px;top:1022.6px;font-size:12px;line-height:14px;color:#f8f8f8;font-weight:normal;letter-spacing:0px;transform:translateX(-50%)">T+</div>
<div style="position:absolute;left:1089px;top:1017px;width:24px;height:24px;background:#e0ead8"></div>
<div class="t" style="left:1101.0px;top:1022.6px;font-size:12px;line-height:14px;color:#e8b8b8;font-weight:normal;letter-spacing:0px;transform:translateX(-50%)">! !</div>
<div style="position:absolute;left:1122px;top:1017px;width:25px;height:24px;background:#c0c4d0"></div>
<svg style="position:absolute;left:1122px;top:1017px;" width="25" height="24" viewBox="0 0 25 24"><path d="M10 3 L2 10 L10 17 V13 Q18 12 19 21 Q23 8 10 7Z" fill="#e8ecf4"/></svg>
<svg style="position:absolute;left:1160px;top:1020px;" width="4" height="18" viewBox="0 0 4 18"><rect x="0" y="0" width="1" height="1" fill="#bdbdbd"/><rect x="3" y="0" width="1" height="1" fill="#bdbdbd"/><rect x="0" y="3" width="1" height="1" fill="#bdbdbd"/><rect x="3" y="3" width="1" height="1" fill="#bdbdbd"/><rect x="0" y="6" width="1" height="1" fill="#bdbdbd"/><rect x="3" y="6" width="1" height="1" fill="#bdbdbd"/><rect x="0" y="9" width="1" height="1" fill="#bdbdbd"/><rect x="3" y="9" width="1" height="1" fill="#bdbdbd"/><rect x="0" y="12" width="1" height="1" fill="#bdbdbd"/><rect x="3" y="12" width="1" height="1" fill="#bdbdbd"/><rect x="0" y="15" width="1" height="1" fill="#bdbdbd"/><rect x="3" y="15" width="1" height="1" fill="#bdbdbd"/></svg>
<svg style="position:absolute;left:1172px;top:1017px;" width="24" height="24" viewBox="0 0 24 24"><path d="M1.5 7 Q1.5 1 8 1.5 Q13 2.5 17 1.5 Q22.5 1.5 22.5 7 Q22.5 12.5 17 12 Q12 11 7 12.5 Q1.5 13 1.5 7Z" fill="#e0e0e0" stroke="#c8c8c8" stroke-width="1.2"/><path d="M2 22 Q1 15 6 14 Q10 14 10 18 Q9 23 2 22Z" fill="#e0e0e0" stroke="#c8c8c8"/><path d="M8 12 Q12 9 14 13 Q16 16 19 12" stroke="#e0a8a8" fill="none"/></svg>
<svg style="position:absolute;left:1201px;top:1028px;" width="8" height="5" viewBox="0 0 8 5"><path d="M0 0 H8 L4 4.5Z" fill="#c8c8c8"/></svg>
<svg style="position:absolute;left:1216px;top:1017px;" width="24" height="24" viewBox="0 0 24 24"><path d="M1.5 7 Q1.5 1 8 1.5 Q13 2.5 17 1.5 Q22.5 1.5 22.5 7 Q22.5 12.5 17 12 Q12 11 7 12.5 Q1.5 13 1.5 7Z" fill="#e0e0e0" stroke="#c8c8c8" stroke-width="1.2"/><path d="M2 22 Q1 15 6 14 Q10 14 10 18 Q9 23 2 22Z" fill="#e0e0e0" stroke="#c8c8c8"/><rect x="13.0" y="13.5" width="10" height="10" rx="1.5" fill="#d2cec0"/><circle cx="18" cy="18.5" r="1.62" fill="none" stroke="#fff" stroke-width="1"/><path d="M19.40 19.31 L21.12 20.30 M18.00 20.12 L18.00 22.10 M16.60 19.31 L14.88 20.30 M16.60 17.69 L14.88 16.70 M18.00 16.88 L18.00 14.90 M19.40 17.69 L21.12 16.70" stroke="#fff" stroke-width="1.2"/></svg>
<svg style="position:absolute;left:1249px;top:1017px;" width="24" height="24" viewBox="0 0 24 24"><path d="M1.5 7 Q1.5 1 8 1.5 Q13 2.5 17 1.5 Q22.5 1.5 22.5 7 Q22.5 12.5 17 12 Q12 11 7 12.5 Q1.5 13 1.5 7Z" fill="#e0e0e0" stroke="#c8c8c8" stroke-width="1.2"/><circle cx="8" cy="20" r="2.5" fill="none" stroke="#c8c8c8" stroke-width="1.3"/><circle cx="15" cy="20" r="2.5" fill="none" stroke="#c8c8c8" stroke-width="1.3"/><path d="M12 10 L9 18 M12 10 L14 18" stroke="#c8c8c8"/></svg>
<svg style="position:absolute;left:1282px;top:1017px;" width="24" height="24" viewBox="0 0 24 24"><path d="M1.5 7 Q1.5 1 8 1.5 Q13 2.5 17 1.5 Q22.5 1.5 22.5 7 Q22.5 12.5 17 12 Q12 11 7 12.5 Q1.5 13 1.5 7Z" fill="#e0e0e0" stroke="#c8c8c8" stroke-width="1.2"/><path d="M10 5 H15 M10 8 H15 M8 13 Q10 19 14 22" stroke="#c8c8c8" fill="none"/></svg>
<svg style="position:absolute;left:1315px;top:1017px;" width="24" height="24" viewBox="0 0 24 24"><path d="M1.5 7 Q1.5 1 8 1.5 Q13 2.5 17 1.5 Q22.5 1.5 22.5 7 Q22.5 12.5 17 12 Q12 11 7 12.5 Q1.5 13 1.5 7Z" fill="#e0e0e0" stroke="#c8c8c8" stroke-width="1.2"/><rect x="12.5" y="13" width="11" height="11" rx="1.5" fill="#e4e4e4" stroke="#c8c8c8"/><circle cx="18" cy="18.5" r="2.5" fill="none" stroke="#c8c8c8"/><path d="M2 22 Q1 15 6 14 Q10 14 10 18 Q9 23 2 22Z" fill="#e0e0e0" stroke="#c8c8c8"/></svg>
<svg style="position:absolute;left:1348px;top:1017px;" width="24" height="24" viewBox="0 0 24 24"><path d="M1.5 7 Q1.5 1 8 1.5 Q13 2.5 17 1.5 Q22.5 1.5 22.5 7 Q22.5 12.5 17 12 Q12 11 7 12.5 Q1.5 13 1.5 7Z" fill="#e0e0e0" stroke="#c8c8c8" stroke-width="1.2"/><ellipse cx="9" cy="7" rx="5" ry="3" fill="#f4f4f4" stroke="#c8c8c8"/></svg>
<svg style="position:absolute;left:1377px;top:1028px;" width="8" height="5" viewBox="0 0 8 5"><path d="M0 0 H8 L4 4.5Z" fill="#c8c8c8"/></svg>
<svg style="position:absolute;left:1394px;top:1017px;" width="24" height="24" viewBox="0 0 24 24"><path d="M1.5 7 Q1.5 1 8 1.5 Q13 2.5 17 1.5 Q22.5 1.5 22.5 7 Q22.5 12.5 17 12 Q12 11 7 12.5 Q1.5 13 1.5 7Z" fill="#e0e0e0" stroke="#c8c8c8" stroke-width="1.2" stroke-dasharray="2 1.5"/></svg>
<svg style="position:absolute;left:1423px;top:1028px;" width="8" height="5" viewBox="0 0 8 5"><path d="M0 0 H8 L4 4.5Z" fill="#c8c8c8"/></svg>
<svg style="position:absolute;left:1438px;top:1017px;" width="24" height="24" viewBox="0 0 24 24"><path d="M1.5 7 Q1.5 1 8 1.5 Q13 2.5 17 1.5 Q22.5 1.5 22.5 7 Q22.5 12.5 17 12 Q12 11 7 12.5 Q1.5 13 1.5 7Z" fill="#e0e0e0" stroke="#c8c8c8" stroke-width="1.2"/><rect x="12.0" y="13.5" width="10" height="10" rx="1.5" fill="#d2cec0"/><circle cx="17" cy="18.5" r="1.62" fill="none" stroke="#fff" stroke-width="1"/><path d="M18.40 19.31 L20.12 20.30 M17.00 20.12 L17.00 22.10 M15.60 19.31 L13.88 20.30 M15.60 17.69 L13.88 16.70 M17.00 16.88 L17.00 14.90 M18.40 17.69 L20.12 16.70" stroke="#fff" stroke-width="1.2"/></svg>
<svg style="position:absolute;left:1468px;top:1028px;" width="8" height="5" viewBox="0 0 8 5"><path d="M0 0 H8 L4 4.5Z" fill="#c8c8c8"/></svg>
<svg style="position:absolute;left:1483px;top:1017px;" width="24" height="24" viewBox="0 0 24 24"><path d="M1.5 7 Q1.5 1 8 1.5 Q13 2.5 17 1.5 Q22.5 1.5 22.5 7 Q22.5 12.5 17 12 Q12 11 7 12.5 Q1.5 13 1.5 7Z" fill="#e0e0e0" stroke="#c8c8c8" stroke-width="1.2"/><ellipse cx="8" cy="7" rx="4" ry="2.5" fill="#f0f0f0" stroke="#c6c6c6"/><rect x="12.0" y="13.5" width="10" height="10" rx="1.5" fill="#d2cec0"/><circle cx="17" cy="18.5" r="1.62" fill="none" stroke="#fff" stroke-width="1"/><path d="M18.40 19.31 L20.12 20.30 M17.00 20.12 L17.00 22.10 M15.60 19.31 L13.88 20.30 M15.60 17.69 L13.88 16.70 M17.00 16.88 L17.00 14.90 M18.40 17.69 L20.12 16.70" stroke="#fff" stroke-width="1.2"/></svg>
<svg style="position:absolute;left:1513px;top:1028px;" width="8" height="5" viewBox="0 0 8 5"><path d="M0 0 H8 L4 4.5Z" fill="#c8c8c8"/></svg>
<svg style="position:absolute;left:1528px;top:1017px;" width="24" height="24" viewBox="0 0 24 24"><path d="M1.5 7 Q1.5 1 8 1.5 Q13 2.5 17 1.5 Q22.5 1.5 22.5 7 Q22.5 12.5 17 12 Q12 11 7 12.5 Q1.5 13 1.5 7Z" fill="#e0e0e0" stroke="#c8c8c8" stroke-width="1.2"/><path d="M3 9 Q8 3 14 7" stroke="#fff" stroke-width="2" fill="none"/><rect x="12.0" y="13.5" width="10" height="10" rx="1.5" fill="#d2cec0"/><circle cx="17" cy="18.5" r="1.62" fill="none" stroke="#fff" stroke-width="1"/><path d="M18.40 19.31 L20.12 20.30 M17.00 20.12 L17.00 22.10 M15.60 19.31 L13.88 20.30 M15.60 17.69 L13.88 16.70 M17.00 16.88 L17.00 14.90 M18.40 17.69 L20.12 16.70" stroke="#fff" stroke-width="1.2"/></svg>
<svg style="position:absolute;left:1561px;top:1017px;" width="24" height="24" viewBox="0 0 24 24"><path d="M2 3 L7 14 L13 5 H20" stroke="#c8c8c8" stroke-width="1.2" fill="none"/><circle cx="13" cy="5" r="1.8" fill="none" stroke="#c8c8c8"/><circle cx="20" cy="5" r="1.8" fill="none" stroke="#c8c8c8"/><rect x="12.5" y="13" width="10" height="10" rx="1" fill="#eee" stroke="#c8c8c8"/></svg>
<svg style="position:absolute;left:1591px;top:1028px;" width="8" height="5" viewBox="0 0 8 5"><path d="M0 0 H8 L4 4.5Z" fill="#c8c8c8"/></svg>
<svg style="position:absolute;left:1605px;top:1017px;" width="24" height="24" viewBox="0 0 24 24"><path d="M2 4 Q10 0 12 4 Q17 0 21 4 Q22 12 18 16 Q10 14 4 16 Q1 10 2 4Z" fill="#f0f0f0" stroke="#c8c8c8" stroke-width="1.2"/><text x="17" y="23" font-size="10" font-family="Liberation Serif" fill="#c8c8c8">ʃ</text></svg>
<svg style="position:absolute;left:1638px;top:1017px;" width="24" height="24" viewBox="0 0 24 24"><path d="M2 4 Q10 0 12 4 Q17 0 21 4 Q22 12 18 16 Q10 14 4 16 Q1 10 2 4Z" fill="#f0f0f0" stroke="#c8c8c8" stroke-width="1.2"/><text x="17" y="23" font-size="10" font-family="Liberation Serif" fill="#c8c8c8">d</text></svg>
<svg style="position:absolute;left:1672px;top:1017px;" width="24" height="24" viewBox="0 0 24 24"><path d="M2 4 Q10 0 12 4 Q17 0 21 4 Q22 12 18 16 Q10 14 4 16 Q1 10 2 4Z" fill="#f0f0f0" stroke="#c8c8c8" stroke-width="1.2"/><text x="17" y="23" font-size="10" font-family="Liberation Serif" fill="#c8c8c8">ʃ</text></svg>
<svg style="position:absolute;left:1705px;top:1017px;" width="24" height="24" viewBox="0 0 24 24"><path d="M4 10 L12 2 L22 14 L14 22Z" fill="#dedede"/><path d="M6 8 L18 20" stroke="#fff" stroke-dasharray="2 2"/></svg>
<div style="position:absolute;left:4px;top:1052px;width:269px;height:25px;background:#fff;border:1px solid #b4b4b4;border-radius:3px;box-sizing:border-box"></div>
<svg style="position:absolute;left:12px;top:1057px;" width="15" height="15" viewBox="0 0 15 15"><circle cx="6" cy="6" r="4.5" fill="none" stroke="#777" stroke-width="1.4"/><path d="M9.5 9.5 L13.5 13.5" stroke="#777" stroke-width="1.6"/></svg>
<div class="t" style="left:33px;top:1056.6px;font-size:13.5px;line-height:16px;color:#1a1a1a;font-weight:normal;letter-spacing:0.45px;">diff</div>
<svg style="position:absolute;left:251px;top:1059px;" width="14" height="12" viewBox="0 0 14 12"><path d="M0 6 L4 1 H14 V11 H4Z" fill="#999"/><path d="M6.5 3.5 L11 8.5 M11 3.5 L6.5 8.5" stroke="#fff" stroke-width="1.3"/></svg>
<div class="t" style="left:1054px;top:1058.6px;font-size:12px;line-height:14px;color:#1a1a1a;font-weight:normal;letter-spacing:0.15px;">Coordinate</div>
<div style="position:absolute;left:1117px;top:1053px;width:90px;height:23px;background:#fff;border:1px solid #b4b4b4;border-radius:2px;box-sizing:border-box"></div>
<div class="t" style="left:1125px;top:1058.6px;font-size:12px;line-height:14px;color:#1a1a1a;font-weight:normal;letter-spacing:0.15px;">112.67,19.74</div>
<svg style="position:absolute;left:1211px;top:1056px;" width="17" height="17" viewBox="0 0 17 17"><path d="M3 3 Q8 0 12 4 L15 12 Q14 16 9 16 Q4 16 3 10Z" fill="#555"/><circle cx="9" cy="12" r="2.5" fill="#fff"/><path d="M13 3 L16 1" stroke="#555"/></svg>
<div class="t" style="left:1240px;top:1058.6px;font-size:12px;line-height:14px;color:#1a1a1a;font-weight:normal;letter-spacing:0.15px;">Scale</div>
<div style="position:absolute;left:1273px;top:1052px;width:97px;height:25px;background:#fff;border:1px solid #b4b4b4;border-radius:3px;box-sizing:border-box"></div>
<div style="position:absolute;left:1349px;top:1053px;width:1px;height:23px;background:#ccc"></div>
<div class="t" style="left:1278px;top:1058.6px;font-size:12px;line-height:14px;color:#1a1a1a;font-weight:normal;letter-spacing:0.15px;">1:7165939</div>
<svg style="position:absolute;left:1355px;top:1063px;" width="8" height="5" viewBox="0 0 8 5"><path d="M0 0 H8 L4 4.5Z" fill="#333"/></svg>
<svg style="position:absolute;left:1381px;top:1056px;" width="13" height="16" viewBox="0 0 13 16"><path d="M3 7 V5 Q3 1 6.5 1 Q10 1 10 5 V7" fill="none" stroke="#555" stroke-width="1.8"/><rect x="1" y="7" width="11" height="8" rx="1" fill="#555"/></svg>
<div class="t" style="left:1403px;top:1058.6px;font-size:12px;line-height:14px;color:#1a1a1a;font-weight:normal;letter-spacing:0.15px;">Magnifier</div>
<div style="position:absolute;left:1458px;top:1053px;width:97px;height:23px;background:#fff;border:1px solid #b4b4b4;border-radius:2px;box-sizing:border-box"></div>
<div style="position:absolute;left:1540px;top:1054px;width:1px;height:21px;background:#ccc"></div>
<div class="t" style="left:1463px;top:1058.6px;font-size:12px;line-height:14px;color:#1a1a1a;font-weight:normal;letter-spacing:0.15px;">100%</div>
<svg style="position:absolute;left:1543px;top:1057px;" width="9" height="16" viewBox="0 0 9 16"><path d="M0.5 5 L4.5 1 L8.5 5Z" fill="#555"/><path d="M0.5 11 L4.5 15 L8.5 11Z" fill="#555"/></svg>
<div class="t" style="left:1565px;top:1058.6px;font-size:12px;line-height:14px;color:#1a1a1a;font-weight:normal;letter-spacing:0.15px;">Rotation</div>
<div style="position:absolute;left:1620px;top:1053px;width:95px;height:23px;background:#fff;border:1px solid #b4b4b4;border-radius:2px;box-sizing:border-box"></div>
<div style="position:absolute;left:1700px;top:1054px;width:1px;height:21px;background:#ccc"></div>
<div class="t" style="left:1626px;top:1058.6px;font-size:12px;line-height:14px;color:#1a1a1a;font-weight:normal;letter-spacing:0.15px;">0.0 °</div>
<svg style="position:absolute;left:1703px;top:1057px;" width="9" height="16" viewBox="0 0 9 16"><path d="M0.5 5 L4.5 1 L8.5 5Z" fill="#555"/><path d="M0.5 11 L4.5 15 L8.5 11Z" fill="#555"/></svg>
<div style="position:absolute;left:1721px;top:1058px;width:14px;height:14px;background:#fff;border:1px solid #888;box-sizing:border-box"></div>
<svg style="position:absolute;left:1723px;top:1060px;" width="10" height="10" viewBox="0 0 10 10"><path d="M1 5 L4 9 L9 1" stroke="#000" stroke-width="1.6" fill="none"/></svg>
<div class="t" style="left:1741px;top:1058.6px;font-size:12px;line-height:14px;color:#1a1a1a;font-weight:normal;letter-spacing:0.15px;">Render</div>
<svg style="position:absolute;left:1795px;top:1057px;" width="16" height="16" viewBox="0 0 16 16"><circle cx="8" cy="8" r="6.5" fill="none" stroke="#777"/><ellipse cx="8" cy="8" rx="3" ry="6.5" fill="none" stroke="#777"/><path d="M1.5 8 H14.5 M2.5 5 H13.5 M2.5 11 H13.5" stroke="#777" stroke-width="0.8"/></svg>
<div class="t" style="left:1812px;top:1058.6px;font-size:12px;line-height:14px;color:#1a1a1a;font-weight:normal;letter-spacing:0.15px;">EPSG:4326</div>
<svg style="position:absolute;left:1896px;top:1056px;" width="18" height="16" viewBox="0 0 18 16"><ellipse cx="9" cy="7" rx="8" ry="6.5" fill="#555"/><path d="M4 12 L3 16 L8 13Z" fill="#555"/><circle cx="5.5" cy="7" r="1.2" fill="#fff"/><circle cx="9" cy="7" r="1.2" fill="#fff"/><circle cx="12.5" cy="7" r="1.2" fill="#fff"/></svg>
<svg style="position:absolute;left:0;top:0" width="1920" height="1080" viewBox="0 0 1920 1080"><defs><clipPath id="mapclip"><rect x="457" y="143" width="938" height="866"/></clipPath></defs><g clip-path="url(#mapclip)"><path d="M865.7 292.4 L877.8 287.8 L880.6 285.0 L885.2 288.7 L892.6 286.0 L903.7 291.5 L918.5 299.8 L929.6 303.5 L940.7 298.9 L944.4 287.8 L948.1 290.6 L953.7 298.9 L954.6 304.4 L948.1 311.9 L946.3 321.1 L945.4 330.4 L948.1 343.3 L953.7 348.9 L958.3 352.6 L959.3 360.0 L963.9 361.9 L960.5 372.5 L951.3 390.7 L949.3 395.9 L948.7 401.8 L944.8 406.9 L940.3 408.9 L935.1 410.8 L925.4 412.8 L918.9 418.0 L915.6 421.8 L915.0 428.3 L918.9 430.9 L912.4 440.0 L907.8 448.1 L907.8 455.6 L911.5 461.1 L917.0 474.1 L923.3 481.1 L918.9 484.4 L920.0 491.1 L922.2 498.9 L925.6 504.4 L924.4 508.9 L928.9 512.2 L934.4 515.6 L942.2 519.4 L947.8 521.7 L950.0 520.0 L947.8 516.7 L946.7 510.0 L950.0 506.7 L952.2 508.9 L954.4 513.3 L955.6 505.6 L958.9 501.7 L965.6 500.0 L972.2 500.6 L978.9 503.3 L984.4 507.8 L987.8 512.2 L991.1 517.8 L992.2 522.2 L990.6 525.6 L992.2 528.9 L997.8 530.6 L1001.1 527.8 L1000.0 522.2 L998.9 515.6 L1002.2 512.2 L1004.4 513.3 L1006.7 515.6 L1010.0 518.3 L1015.6 519.4 L1023.3 521.1 L1028.9 524.4 L1033.3 527.8 L1036.7 530.6 L1031.1 531.1 L1023.3 532.2 L1017.8 533.3 L1015.6 536.7 L1014.4 541.1 L1018.9 543.3 L1023.3 546.7 L1026.7 551.1 L1028.9 556.7 L1033.3 561.1 L1038.9 563.3 L1043.3 564.4 L1046.7 565.6 L1044.4 572.2 L1043.3 577.8 L1044.4 585.6 L1043.3 590.0 L1038.9 588.9 L1034.4 585.6 L1031.1 580.0 L1028.9 573.3 L1023.3 568.9 L1015.6 567.8 L1010.0 566.7 L1005.6 564.4 L1001.1 555.6 L997.8 547.8 L990.0 543.3 L982.2 538.9 L977.8 533.3 L971.1 526.7 L965.6 522.2 L961.1 521.1 L960.0 524.4 L964.4 531.1 L967.8 537.8 L970.0 543.3 L972.2 550.0 L972.2 555.6 L967.8 558.9 L963.3 553.3 L960.0 546.7 L953.3 537.8 L947.8 532.2 L942.2 527.8 L936.7 524.4 L928.9 521.1 L923.3 520.0 L917.8 522.2 L911.1 525.6 L910.0 532.2 L906.7 535.6 L900.0 536.7 L894.4 535.6 L890.0 530.0 L886.7 491.9 L886.7 488.1 L885.9 485.2 L883.0 481.5 L877.8 479.3 L871.9 477.8 L865.2 476.3 L867.4 491.9 L862.0 505.0 L857.0 491.9 L855.6 486.7 L850.4 481.5 L851.1 477.0 L848.1 474.1 L845.9 479.3 L842.2 479.3 L841.5 471.9 L840.0 460.7 L837.0 453.3 L832.6 445.9 L834.1 438.5 L832.6 431.1 L831.9 425.9 L828.7 420.0 L825.9 415.6 L825.9 400.7 L833.3 396.1 L837.0 406.3 L844.4 413.7 L855.6 411.9 L859.3 406.3 L855.6 400.7 L852.8 389.6 L853.7 374.8 L859.3 371.1 L859.3 360.0 L858.3 345.2 L855.6 337.8 L856.5 330.4 L860.2 323.0 L862.0 311.9 L865.7 302.6Z M937.2 415.8 L943.5 403.3 L945.5 404.5 L938.5 416.0Z M926.7 181.1 L929.3 175.9 L931.6 175.9 L929.9 182.4Z M933.2 198.6 L937.1 192.8 L939.7 193.5 L935.8 199.3Z M926.0 200.3 L929.9 199.3 L932.5 201.9 L930.6 203.8 L928.6 201.9Z M932.5 239.5 L937.1 238.8 L937.7 242.1 L935.1 243.4Z M905.9 248.6 L910.5 247.3 L914.4 248.6 L915.0 253.8 L909.8 254.4 L906.6 251.8Z M897.5 258.3 L898.8 258.3 L900.8 265.4 L898.2 265.4Z M899.5 272.6 L907.2 271.3 L911.8 273.2 L904.0 275.8Z M931.9 266.7 L937.7 269.3 L930.6 276.5 L928.6 273.2Z M932.5 169.5 L934.5 169.8 L933.5 172.0Z M928.1 466.7 L935.6 464.8 L939.3 468.5 L937.4 474.1 L939.3 479.6 L935.6 485.2 L931.9 483.3 L930.0 474.1Z M943.0 472.2 L946.7 471.3 L951.3 477.8 L948.5 479.6 L944.8 476.9Z M953.1 481.5 L957.8 480.0 L960.0 481.9 L955.0 483.3Z M933.7 505.6 L935.6 505.2 L948.9 518.1 L947.0 520.4 L933.7 510.7Z M929.1 542.6 L935.6 538.9 L943.0 542.6 L943.9 550.0 L939.3 555.6 L931.9 553.7 L928.1 548.1Z M1041.1 533.3 L1044.4 522.2 L1047.8 513.3 L1052.2 515.6 L1056.7 522.2 L1058.9 528.9 L1056.7 535.6 L1051.1 541.1 L1045.6 537.8 L1039.4 534.4Z M983.7 561.1 L991.1 563.0 L998.5 570.4 L1005.9 581.5 L998.5 575.9 L987.4 568.5Z M1028.1 548.1 L1035.6 550.0 L1047.6 555.9 L1041.1 557.8 L1031.9 555.6Z M936.5 587.0 L943.0 584.3 L944.8 588.9 L942.0 600.0 L935.6 600.0Z M935.6 600.0 L942.0 600.0 L940.2 607.4 L934.6 605.6Z M948.5 584.3 L952.2 585.2 L954.1 592.6 L951.3 593.5Z M959.6 593.5 L967.0 591.7 L972.6 596.3 L970.7 600.9 L961.5 600.0Z M860.0 540.0 L894.4 547.4 L902.2 550.0 L911.1 558.5 L915.2 563.0 L913.3 574.0 L915.2 585.2 L913.3 594.4 L909.6 600.0 L903.7 604.8 L894.4 606.7 L860.0 606.0Z M1000.0 586.7 L1006.7 593.3 L1016.7 601.7 L1026.7 610.0 L1035.0 618.3 L1040.0 628.3 L1038.3 630.0 L1030.0 623.3 L1020.0 616.7 L1010.0 611.7 L1003.3 615.0 L998.3 621.7 L995.0 620.0 L1000.0 606.7 L1001.7 596.7Z M1017.0 583.3 L1019.8 582.4 L1025.4 596.3 L1022.6 598.1Z M931.7 628.3 L932.5 621.7 L938.3 623.3 L946.7 626.7 L955.0 631.7 L961.7 636.7 L966.7 640.0 L975.0 637.5 L980.0 640.0 L983.3 643.3 L991.7 640.0 L996.7 639.2 L998.3 643.3 L995.0 650.0 L993.3 655.0 L994.2 658.3 L990.0 661.7 L985.0 665.0 L978.3 668.3 L973.3 673.3 L968.3 678.3 L961.7 681.7 L953.3 683.3 L943.3 686.7 L938.3 693.3 L935.0 696.7 L933.3 691.7 L935.0 683.3 L936.7 673.3 L938.3 663.3 L940.0 653.3 L941.7 641.7 L940.0 633.3 L933.3 630.0Z M961.7 693.3 L965.0 685.0 L970.0 680.0 L973.3 685.0 L973.3 693.3 L966.7 696.7Z M978.3 691.7 L983.3 680.0 L986.7 671.7 L995.0 668.3 L1003.3 668.3 L1011.7 671.7 L1015.0 678.3 L1013.3 688.3 L1010.0 695.0 L1006.7 700.0 L1003.3 706.7 L1000.0 716.7 L996.7 726.7 L995.0 736.7 L1000.0 743.3 L1003.3 750.0 L1001.7 758.3 L996.7 763.3 L990.0 765.0 L983.3 760.0 L980.0 751.7 L975.0 748.3 L970.0 745.0 L963.3 740.0 L957.5 733.3 L956.7 723.3 L960.0 718.3 L968.3 716.7 L976.7 715.0 L980.8 710.0 L980.0 701.7Z M1003.3 745.0 L1006.7 733.3 L1010.0 723.3 L1016.7 711.7 L1023.3 700.0 L1030.0 686.7 L1035.0 670.0 L1036.7 658.3 L1040.0 653.3 L1040.0 666.7 L1038.3 680.0 L1038.3 693.3 L1036.7 700.0 L1030.0 706.7 L1021.7 715.0 L1015.0 723.3 L1010.0 731.7 L1006.7 740.0Z M1020.0 660.0 L1025.0 653.3 L1028.3 657.5 L1023.3 662.5Z M1026.7 726.7 L1030.0 720.0 L1040.0 715.0 L1050.0 710.0 L1060.0 708.3 L1061.7 716.7 L1060.0 733.3 L1050.0 738.3 L1036.7 736.7 L1028.3 733.3Z M1010.8 756.7 L1018.3 752.5 L1022.5 758.3 L1016.7 762.5Z M933.3 601.7 L941.7 600.0 L940.0 608.3 L936.7 610.0Z M1052.2 589.6 L1056.3 584.5 L1060.4 588.5 L1070.6 591.6 L1086.9 588.5 L1091.0 584.5 L1095.0 588.5 L1101.1 592.6 L1105.2 600.8 L1113.4 604.8 L1111.3 613.0 L1109.3 627.3 L1113.4 637.5 L1119.5 651.7 L1117.5 657.8 L1121.5 661.9 L1129.7 671.1 L1121.5 664.0 L1115.4 661.9 L1105.2 661.9 L1101.1 657.8 L1099.1 661.9 L1095.0 655.8 L1088.9 653.8 L1084.8 645.6 L1082.8 641.5 L1088.9 631.3 L1082.8 630.3 L1076.7 623.2 L1070.6 617.1 L1060.4 608.9 L1054.3 600.8Z M1052.2 640.5 L1056.3 639.5 L1064.5 647.6 L1072.6 651.7 L1084.8 645.6 L1088.9 651.7 L1088.9 668.0 L1091.0 680.3 L1095.0 686.4 L1099.1 694.5 L1101.1 702.7 L1099.1 708.8 L1102.2 721.0 L1097.1 714.9 L1092.0 702.7 L1088.9 702.7 L1088.9 714.9 L1084.8 714.9 L1076.7 708.8 L1074.7 702.7 L1076.7 690.5 L1072.6 680.3 L1064.5 671.1 L1058.3 664.0 L1057.3 651.7Z M1055.3 633.4 L1060.4 632.4 L1066.5 637.5 L1066.5 643.6 L1060.4 643.6Z M1052.2 684.3 L1056.3 682.3 L1064.5 680.3 L1062.4 686.4 L1054.3 687.4Z M1111.3 698.6 L1119.5 694.5 L1121.5 702.7 L1120.5 719.0 L1117.5 727.1 L1113.4 721.0 L1111.3 710.8Z M1135.8 721.0 L1139.9 714.9 L1144.0 725.1 L1146.0 729.2 L1139.9 731.2 L1135.8 739.4 L1132.7 735.3Z M1069.6 755.7 L1073.6 753.6 L1077.7 759.8 L1075.7 763.8 L1070.6 761.8Z M1121.5 678.2 L1125.6 676.2 L1128.7 682.3 L1124.6 682.3Z M932.8 860.6 L935.6 855.9 L941.1 852.2 L943.9 839.3 L942.0 830.0 L949.4 818.9 L959.6 814.3 L970.7 810.6 L983.7 806.9 L986.5 802.2 L985.6 797.6 L990.2 791.6 L1002.2 790.2 L1005.9 784.6 L1008.7 781.4 L1013.3 783.7 L1017.0 784.6 L1022.6 785.6 L1028.1 792.0 L1030.9 800.4 L1030.9 807.8 L1027.2 813.3 L1020.7 818.0 L1022.6 816.1 L1030.0 810.6 L1038.3 807.8 L1046.7 806.9 L1050.4 801.3 L1052.2 791.1 L1060.6 786.5 L1068.1 791.5 L1073.7 793.3 L1075.6 785.9 L1077.4 769.3 L1081.1 766.5 L1090.4 770.2 L1094.1 774.8 L1096.9 771.1 L1098.7 763.7 L1100.6 766.5 L1105.2 767.4 L1112.6 765.6 L1114.4 760.0 L1111.3 743.4 L1108.3 729.2 L1119.5 731.2 L1129.7 739.4 L1141.9 747.5 L1148.0 759.7 L1151.5 767.4 L1154.3 776.7 L1149.6 784.1 L1144.1 789.6 L1156.1 791.5 L1157.0 797.0 L1155.2 800.7 L1158.9 806.3 L1160.7 815.6 L1158.9 821.1 L1166.3 832.2 L1167.2 843.3 L1166.3 852.6 L1162.6 863.7 L1160.7 869.3 L1153.3 874.8 L1149.6 871.1 L1146.9 873.0 L1147.8 885.9 L1146.9 895.2 L1146.9 902.6 L1144.1 897.0 L1142.2 887.8 L1140.4 878.5 L1136.7 865.6 L1133.0 860.9 L1129.3 856.3 L1127.4 848.9 L1129.3 839.6 L1133.0 835.9 L1134.8 830.4 L1131.1 828.5 L1127.4 835.9 L1121.9 854.4 L1112.6 865.6 L1107.0 874.8 L1105.2 887.8 L1112.6 887.8 L1118.1 893.3 L1121.9 904.4 L1123.7 911.9 L1120.0 923.0 L1114.4 932.2 L1105.2 939.6 L1102.4 937.8 L1099.6 932.2 L1096.9 927.6 L1098.7 919.3 L1101.5 915.6 L1097.8 911.9 L1094.1 917.4 L1092.2 924.8 L1086.7 924.8 L1077.4 921.1 L1066.3 915.6 L1057.0 911.9 L1049.6 906.3 L1042.2 897.0 L1039.4 889.6 L1038.5 880.4 L1035.7 871.1 L1038.3 861.5 L1046.7 855.9 L1049.4 848.5 L1045.7 844.8 L1043.0 840.2 L1036.5 833.7 L1027.2 831.9 L1022.6 827.2 L1017.0 825.4 L1009.6 827.2 L1008.7 831.9 L1010.6 835.6 L1005.9 839.3 L1009.6 844.8 L1008.7 848.5 L1004.1 846.7 L1002.2 841.1 L996.7 843.0 L993.0 839.3 L992.0 832.8 L990.2 835.6 L985.6 843.0 L982.8 841.1 L985.6 847.6 L980.0 853.1 L977.2 848.5 L978.1 840.2 L976.3 830.0 L969.8 828.1 L962.4 833.7 L955.9 844.8 L951.3 856.9 L948.5 866.1 L943.9 871.7 L939.3 871.7 L933.7 867.0Z M1121.9 860.0 L1125.6 858.1 L1127.4 863.7 L1126.5 871.1 L1122.8 871.1Z M1146.9 871.1 L1150.6 870.2 L1155.2 875.7 L1151.5 878.5Z M927.3 885.7 L934.5 880.8 L941.7 881.4 L946.5 885.7 L953.7 886.3 L951.3 891.7 L946.5 894.1 L938.1 896.5 L932.1 894.1 L928.5 890.5Z M881.5 918.2 L886.3 914.5 L893.5 913.3 L898.4 916.4 L905.6 915.8 L910.4 914.5 L908.0 920.6 L902.0 924.2 L895.9 921.8 L888.7 921.8 L882.7 920.6Z M894.7 926.6 L898.4 924.8 L899.6 927.8 L895.9 929.0Z M877.9 933.8 L882.7 930.2 L884.5 931.4 L881.5 934.4Z M875.5 941.0 L880.3 938.0 L885.1 942.2 L882.7 944.6 L876.7 944.0Z M862.2 904.9 L865.8 898.3 L867.7 898.9 L865.2 905.5Z M882.1 910.3 L886.3 907.9 L887.5 911.5 L883.9 912.1Z M824.9 965.1 L829.7 961.5 L835.7 956.7 L843.0 953.1 L849.0 950.1 L852.6 949.5 L850.2 954.3 L847.8 959.1 L843.0 957.9 L838.2 961.5 L830.9 965.1 L826.1 966.9Z M850.2 955.5 L853.8 954.3 L856.2 956.7 L852.6 959.7Z M835.1 971.7 L837.6 965.7 L839.4 966.3 L836.4 972.3Z M826.7 973.5 L829.1 971.1 L830.9 975.9 L828.5 977.8Z M808.1 972.3 L811.1 972.9 L813.5 979.6 L811.7 985.6 L809.3 984.4 L811.1 979.0Z M806.9 979.6 L808.1 980.2 L807.5 986.8 L806.3 986.2Z M1104.4 946.4 L1108.0 944.0 L1111.9 948.0 L1107.0 950.0Z M813.3 646.7 L815.6 652.2 L814.4 658.9 L812.2 665.6 L812.2 672.2 L815.6 678.9 L817.8 683.3 L821.1 688.9 L824.4 690.0 L826.7 686.7 L830.0 685.6 L835.6 687.8 L837.8 690.0 L836.7 692.2 L831.1 694.4 L826.7 695.6 L823.3 692.2 L820.0 694.4 L815.6 697.8 L810.0 700.0 L804.4 702.2 L800.0 705.6 L798.9 712.2 L795.6 715.6 L785.6 717.8 L777.8 720.0 L774.4 723.3 L773.3 730.0 L773.3 733.3 L768.3 741.7 L763.3 751.7 L758.3 755.0 L750.0 758.3 L743.3 761.7 L740.0 768.3 L733.3 775.0 L725.0 781.7 L716.7 785.0 L713.3 790.0 L706.7 795.0 L698.3 800.0 L697.5 798.3 L701.7 786.7 L706.7 780.0 L713.3 773.3 L720.0 765.0 L725.0 760.0 L730.0 755.0 L736.7 751.7 L743.3 748.3 L750.0 741.7 L756.7 735.0 L763.3 728.3 L768.9 721.1 L774.4 713.3 L780.0 707.8 L785.6 702.2 L788.9 696.7 L794.4 691.1 L801.1 690.0 L804.4 683.3 L802.2 678.9 L798.9 672.2 L800.0 665.6 L804.4 660.0 L808.9 654.4 L811.1 647.8Z M684.2 820.0 L686.7 812.5 L690.8 813.3 L692.5 816.7 L690.8 826.7 L687.5 827.5Z M700.0 801.7 L704.2 801.7 L705.0 806.7 L700.8 808.3Z M758.3 865.0 L763.0 865.5 L764.2 869.2 L759.0 869.0Z M830.0 618.9 L835.6 617.8 L840.0 624.4 L838.9 632.2 L835.6 634.4 L832.2 626.7Z M847.8 618.9 L853.3 617.8 L852.2 624.4 L850.0 625.6Z M821.1 643.3 L826.7 643.3 L834.4 637.8 L831.1 646.7 L826.7 648.3 L822.2 646.7Z" fill="#ffffb2" stroke="#1e1e1e" stroke-width="0.85" stroke-linejoin="round"/><path d="M885.2 288.7 L884.3 306.3 L885.2 319.3 L892.6 324.8 L893.5 333.1 L900.0 334.1 L909.3 333.1 L905.6 324.8 L911.1 313.7 L911.1 302.6 L890.7 291.5 L885.2 288.7 M859.6 323.7 L866.1 325.6 L879.1 319.1 L884.6 318.1 M866.1 325.6 L861.5 333.0 L861.5 342.2 L865.2 349.6 L872.6 357.0 L876.3 358.9 L883.7 355.2 L887.4 344.1 L893.0 338.5 L893.5 333.1 M909.3 333.1 L920.4 341.5 L946.3 339.6 M920.4 341.5 L915.7 352.6 L916.7 369.3 L915.6 373.9 L909.8 375.8 L904.6 379.7 L907.9 384.9 L915.6 385.6 L925.4 397.2 L942.2 390.7 M883.3 356.3 L900.0 358.1 L914.8 352.6 M876.9 360.0 L876.9 371.1 L882.6 376.5 L882.6 387.5 L900.7 384.3 L904.6 379.7 M882.6 387.5 L881.3 399.8 M881.9 375.9 L886.5 366.7 L898.5 366.3 L915.2 363.5 M863.0 371.1 L865.7 382.2 L861.1 393.3 L863.9 406.3 M868.5 373.0 L875.9 371.1 L882.4 376.7 M881.3 399.8 L876.9 406.3 L882.0 412.1 L883.2 418.6 L879.6 426.7 L868.5 424.8 L855.6 428.5 M880.0 410.2 L887.8 410.8 L896.8 413.4 L897.5 421.8 L902.0 428.3 L905.3 440.0 M902.0 428.3 L910.5 421.2 L928.6 406.9 L942.2 390.7 L951.3 390.7 M905.3 440.0 L903.7 460.0 L904.0 474.0 M907.9 384.9 L906.6 394.6 L909.8 397.2 L908.5 400.5 L902.7 403.1 L903.3 414.1 L910.5 421.2 M855.6 428.5 L848.1 437.8 L846.3 450.7 L851.0 452.0 L856.0 459.0 L862.0 454.0 L876.0 454.0 L886.0 457.0 L886.0 464.0 L879.0 470.0 L874.0 473.0 L873.0 477.0 M868.5 424.8 L870.4 435.9 L874.1 437.8 L875.0 448.0 L876.0 454.0 M833.3 426.7 L844.4 424.8 L850.0 435.9 L846.0 441.0 L846.0 449.0 M886.0 457.0 L896.0 455.0 L903.0 457.0 L903.0 470.0 L893.0 475.0 L890.0 479.0 L893.0 485.0 M856.0 459.0 L860.0 471.0 L865.0 478.0 M904.0 474.0 L906.7 480.0 L911.1 488.9 L918.9 502.2 L920.0 506.7 L914.4 513.3 L901.1 518.9 M956.7 510.6 L976.7 516.7 L990.0 523.3 M965.6 519.4 L976.7 516.7 M1001.1 554.4 L1016.7 545.6 M1005.9 564.8 L1024.0 566.0 M899.0 562.0 L899.0 606.0 M940.0 629.2 L946.7 636.7 L948.3 650.0 L951.7 663.3 L953.3 670.0 L946.7 678.3 L938.3 693.3 M948.3 650.0 L960.0 643.3 L968.3 643.3 L983.3 643.3 M950.0 658.3 L958.3 656.7 L970.0 655.0 L980.0 658.3 L986.7 650.0 L993.3 641.7 M995.0 697.5 L1003.3 696.7 L996.7 703.3 L986.7 720.0 L976.7 733.3 L970.0 741.7 M1054.3 600.8 L1070.6 603.8 L1080.8 608.9 L1095.0 603.8 L1101.1 602.8 L1105.2 600.8 M1095.0 603.8 L1094.0 615.0 L1101.1 621.1 L1099.1 641.5 L1101.1 657.8 M1088.9 682.3 L1095.0 686.4 L1084.8 694.5 L1078.7 706.8 M1015.2 785.6 L1015.2 815.2 L1020.3 817.0 L1018.9 824.4 M997.6 805.9 L1015.2 806.4 M997.6 805.9 L995.7 817.0 L985.6 820.7 L983.7 824.4 L991.1 826.3 L993.0 832.8 M933.2 860.1 L942.0 859.6 L947.6 844.8 L955.9 843.9 M947.6 844.8 L953.1 831.9 L962.4 823.5 L974.4 820.3 L983.7 821.7 M1038.3 831.9 L1039.3 822.6 L1045.7 817.0 L1052.2 807.8 L1063.3 809.6 L1066.1 803.1 L1063.3 799.4 L1052.2 800.4 M1063.3 810.6 L1068.9 821.7 L1074.4 830.9 L1080.0 843.0 M1066.1 796.7 L1074.4 795.7 L1080.0 792.0 M1046.7 844.8 L1057.8 837.4 L1063.3 833.7 L1073.5 835.6 L1080.0 839.3 M1059.6 835.6 L1061.5 844.8 L1055.0 859.6 L1046.7 856.9 M1055.0 859.6 L1061.5 855.9 L1060.6 863.3 L1070.7 868.9 L1073.5 859.6 L1080.0 863.3 L1079.3 878.5 L1090.4 880.4 L1097.8 878.5 M1077.4 837.8 L1081.1 845.2 L1090.4 847.0 L1100.6 839.6 L1108.9 835.9 L1107.0 817.4 L1099.6 787.8 L1083.0 788.7 L1077.4 796.1 L1068.1 797.0 L1066.3 804.4 M1099.6 784.1 L1121.9 782.2 L1127.4 760.0 M1107.0 817.4 L1123.7 818.3 L1145.9 817.4 L1155.2 815.6 M1099.6 787.8 L1099.6 763.7 M1127.4 760.0 L1133.0 774.8 L1142.2 797.0 L1154.3 815.6 M1145.9 818.3 L1152.4 854.4 L1134.8 862.8 M1121.9 818.3 L1123.7 828.5 L1129.3 834.1 M1100.6 839.6 L1112.6 839.6 L1114.4 854.4 L1120.0 856.3 M1100.6 839.6 L1099.6 856.3 L1103.3 865.6 L1094.1 878.5 L1095.9 889.6 L1105.2 887.8 M1038.5 880.4 L1064.4 881.3 L1068.1 874.8 L1071.9 876.7 L1077.4 885.9 L1095.9 889.6 M1079.3 878.5 L1079.3 889.6 L1094.1 891.5 M1051.5 902.6 L1064.4 898.9 L1070.0 895.2 L1073.7 885.9 M1057.0 908.1 L1090.4 919.3 L1092.2 923.0 M1092.2 897.0 L1097.8 900.7 L1107.0 900.7 L1113.5 906.3 L1114.4 917.4 L1110.7 930.4 L1103.3 938.7 M1097.8 899.8 L1103.3 913.7 M926.1 913.3 L929.7 917.0 L934.5 915.2 M934.5 883.2 L934.5 888.0 L940.5 888.0 L939.3 880.8" fill="none" stroke="#1e1e1e" stroke-width="0.85" stroke-linejoin="round"/><path d="M898.3 492.2 L903.3 491.7 L906.7 495.6 L904.4 502.2 L902.2 498.9 L900.0 501.1 L898.9 496.7Z" fill="#fff" stroke="#262626" stroke-width="0.8"/><g fill="#2a2a2a"><circle cx="821.3" cy="926.6" r="0.75"/><circle cx="835.8" cy="923.0" r="0.75"/><circle cx="843.0" cy="919.4" r="0.75"/><circle cx="857.4" cy="929.0" r="0.75"/><circle cx="851.4" cy="935.0" r="0.75"/><circle cx="847.8" cy="944.6" r="0.75"/><circle cx="867.1" cy="945.8" r="0.75"/><circle cx="862.2" cy="959.1" r="0.75"/><circle cx="869.5" cy="956.7" r="0.75"/><circle cx="915.2" cy="915.8" r="0.75"/><circle cx="922.4" cy="914.5" r="0.75"/><circle cx="916.4" cy="919.4" r="0.75"/><circle cx="929.7" cy="909.7" r="0.75"/><circle cx="917.6" cy="904.9" r="0.75"/><circle cx="936.9" cy="901.3" r="0.75"/><circle cx="910.4" cy="878.4" r="0.75"/><circle cx="923.6" cy="883.8" r="0.75"/><circle cx="915.2" cy="875.4" r="0.75"/><circle cx="951.3" cy="872.4" r="0.75"/><circle cx="957.3" cy="879.6" r="0.75"/><circle cx="880.3" cy="901.3" r="0.75"/><circle cx="873.1" cy="896.5" r="0.75"/><circle cx="859.8" cy="909.7" r="0.75"/><circle cx="862.2" cy="914.5" r="0.75"/><circle cx="888.7" cy="932.6" r="0.75"/><circle cx="902.0" cy="913.3" r="0.75"/><circle cx="889.9" cy="925.4" r="0.75"/><circle cx="916.4" cy="885.7" r="0.75"/><circle cx="928.5" cy="889.3" r="0.75"/><circle cx="826.1" cy="967.5" r="0.75"/><circle cx="840.6" cy="963.9" r="0.75"/><circle cx="844.2" cy="966.3" r="0.75"/><circle cx="871" cy="650" r="0.75"/><circle cx="880" cy="660" r="0.75"/><circle cx="888" cy="648" r="0.75"/><circle cx="895" cy="672" r="0.75"/><circle cx="900" cy="680" r="0.75"/><circle cx="884" cy="675" r="0.75"/><circle cx="815" cy="744" r="0.75"/><circle cx="792" cy="818" r="0.75"/><circle cx="835" cy="813" r="0.75"/><circle cx="850" cy="815" r="0.75"/><circle cx="757" cy="851" r="0.75"/><circle cx="776" cy="865" r="0.75"/><circle cx="940" cy="600" r="0.75"/><circle cx="948" cy="612" r="0.75"/><circle cx="988" cy="475" r="0.75"/><circle cx="984" cy="495" r="0.75"/><circle cx="966" cy="594" r="0.75"/><circle cx="978" cy="596" r="0.75"/><circle cx="985" cy="620" r="0.75"/><circle cx="1000" cy="640" r="0.75"/><circle cx="1010" cy="660" r="0.75"/><circle cx="1020" cy="640" r="0.75"/><circle cx="1055" cy="620" r="0.75"/><circle cx="1060" cy="640" r="0.75"/><circle cx="1070" cy="652" r="0.75"/><circle cx="1090" cy="675" r="0.75"/><circle cx="1130" cy="658" r="0.75"/><circle cx="1122" cy="668" r="0.75"/><circle cx="1146" cy="700" r="0.75"/><circle cx="1100" cy="697" r="0.75"/><circle cx="1105" cy="715" r="0.75"/><circle cx="1044" cy="860" r="0.75"/><circle cx="1000" cy="845" r="0.75"/><circle cx="1140" cy="895" r="0.75"/><circle cx="1110" cy="880" r="0.75"/><circle cx="1089" cy="912" r="0.75"/><circle cx="700" cy="668" r="0.75"/><circle cx="713" cy="708" r="0.75"/></g></g></svg>
<div style="position:absolute;left:105px;top:86px;width:446px;height:860px;background:#fff;border:1px solid #a6a6a6;box-sizing:border-box;box-shadow:1px 1px 2px rgba(0,0,0,0.12)"></div>
<div class="t" style="left:133px;top:90.6px;font-size:13.5px;line-height:16px;color:#111;font-weight:normal;letter-spacing:0.45px;">New <u>M</u>ap View</div>
<div class="t" style="left:437px;top:90.6px;font-size:13.5px;line-height:16px;color:#111;font-weight:normal;letter-spacing:0.45px;">Ctrl+M</div>
<svg style="position:absolute;left:112px;top:90px;" width="16" height="16" viewBox="0 0 16 16"><path d="M2 1 H12 Q13 1 13 2 V13 H3 Q2 13 2 12Z" fill="#e4e4e4" stroke="#b0b0b0"/><rect x="8.0" y="8.0" width="8" height="8" rx="1.5" fill="#c9a400"/><circle cx="12" cy="12" r="1.30" fill="none" stroke="#fff" stroke-width="1"/><path d="M13.12 12.65 L14.49 13.44 M12.00 13.30 L12.00 14.88 M10.88 12.65 L9.51 13.44 M10.88 11.35 L9.51 10.56 M12.00 10.70 L12.00 9.12 M13.12 11.35 L14.49 10.56" stroke="#fff" stroke-width="1.2"/></svg>
<div class="t" style="left:133px;top:115.6px;font-size:13.5px;line-height:16px;color:#111;font-weight:normal;letter-spacing:0.45px;">New <u>3</u>D Map View</div>
<div class="t" style="left:437px;top:115.6px;font-size:13.5px;line-height:16px;color:#111;font-weight:normal;letter-spacing:0.45px;">Ctrl+Alt+M</div>
<svg style="position:absolute;left:112px;top:115px;" width="16" height="16" viewBox="0 0 16 16"><path d="M0 9 L4 3 H14 L12 10 H2Z" fill="#e0e0e0" stroke="#b0b0b0"/><rect x="8.0" y="8.0" width="8" height="8" rx="1.5" fill="#c9a400"/><circle cx="12" cy="12" r="1.30" fill="none" stroke="#fff" stroke-width="1"/><path d="M13.12 12.65 L14.49 13.44 M12.00 13.30 L12.00 14.88 M10.88 12.65 L9.51 13.44 M10.88 11.35 L9.51 10.56 M12.00 10.70 L12.00 9.12 M13.12 11.35 L14.49 10.56" stroke="#fff" stroke-width="1.2"/></svg>
<div class="t" style="left:133px;top:140.6px;font-size:13.5px;line-height:16px;color:#111;font-weight:normal;letter-spacing:0.45px;">Pan Map</div>
<div style="position:absolute;left:109px;top:136px;width:21px;height:22px;background:#e2e2e2;border:1px solid #b0b0b0;border-radius:3px;box-sizing:border-box"></div>
<svg style="position:absolute;left:112px;top:140px;" width="16" height="16" viewBox="0 0 16 16"><path d="M4 15 Q1 9 2 7 Q3 6 5 8 V3 Q5 1.5 6.5 2 V7 V1.5 Q8 0.5 9 1.5 V7 V2 Q10.5 1 11.5 2.5 V8 V4 Q13 3 14 4.5 V10 Q14 14 11 15Z" fill="#fff" stroke="#333" stroke-width="0.8"/></svg>
<div class="t" style="left:133px;top:165.6px;font-size:13.5px;line-height:16px;color:#111;font-weight:normal;letter-spacing:0.45px;">Pan Map to Selection</div>
<svg style="position:absolute;left:112px;top:165px;" width="16" height="16" viewBox="0 0 16 16"><rect x="3" y="3" width="10" height="10" fill="#f7e74a"/><path d="M8 0 L11 3 H5Z M8 16 L11 13 H5Z M0 8 L3 5 V11Z M16 8 L13 5 V11Z" fill="#5b8fd0"/><circle cx="8" cy="8" r="3" fill="#5b8fd0"/></svg>
<div class="t" style="left:133px;top:190.6px;font-size:13.5px;line-height:16px;color:#111;font-weight:normal;letter-spacing:0.45px;">Zoom In</div>
<div class="t" style="left:437px;top:190.6px;font-size:13.5px;line-height:16px;color:#111;font-weight:normal;letter-spacing:0.45px;">Ctrl+Alt++</div>
<svg style="position:absolute;left:112px;top:190px;" width="16" height="16" viewBox="0 0 16 16"><path d="M1.5 14.5 L6 10" stroke="#333" stroke-width="3"/><path d="M2 14 L5.5 10.5" stroke="#e8b800" stroke-width="1.6"/><circle cx="10" cy="6" r="5" fill="#fff" stroke="#555" stroke-width="1"/><path d="M7 6 H13 M10 3 V9" stroke="#4a80c0" stroke-width="1.8"/></svg>
<div class="t" style="left:133px;top:215.6px;font-size:13.5px;line-height:16px;color:#111;font-weight:normal;letter-spacing:0.45px;">Zoom Out</div>
<div class="t" style="left:437px;top:215.6px;font-size:13.5px;line-height:16px;color:#111;font-weight:normal;letter-spacing:0.45px;">Ctrl+Alt+-</div>
<svg style="position:absolute;left:112px;top:215px;" width="16" height="16" viewBox="0 0 16 16"><path d="M1.5 14.5 L6 10" stroke="#333" stroke-width="3"/><path d="M2 14 L5.5 10.5" stroke="#e8b800" stroke-width="1.6"/><circle cx="10" cy="6" r="5" fill="#fff" stroke="#555" stroke-width="1"/><path d="M7 6 H13" stroke="#4a80c0" stroke-width="1.8"/></svg>
<div style="position:absolute;left:110px;top:236px;width:436px;height:1px;background:#c8c8c8"></div>
<div class="t" style="left:133px;top:242.6px;font-size:13.5px;line-height:16px;color:#111;font-weight:normal;letter-spacing:0.45px;">Identify Features</div>
<div class="t" style="left:437px;top:242.6px;font-size:13.5px;line-height:16px;color:#111;font-weight:normal;letter-spacing:0.45px;">Ctrl+Shift+I</div>
<svg style="position:absolute;left:112px;top:242px;" width="16" height="16" viewBox="0 0 16 16"><circle cx="7" cy="7" r="6" fill="#5b8fd0"/><path d="M7 4 V5 M6 6.5 H8 L7 11" stroke="#fff" stroke-width="1.5"/><path d="M9 9 L15 15 L12 15 L13 17 L10 14 L9 16Z" fill="#fff" stroke="#555" stroke-width="0.6"/></svg>
<div class="t" style="left:133px;top:267.6px;font-size:13.5px;line-height:16px;color:#111;font-weight:normal;letter-spacing:0.45px;">Measure</div>
<svg style="position:absolute;left:540px;top:271px;" width="5" height="8" viewBox="0 0 5 8"><path d="M0 0 L4 4 L0 8Z" fill="#555"/></svg>
<div class="t" style="left:133px;top:292.6px;font-size:13.5px;line-height:16px;color:#111;font-weight:normal;letter-spacing:0.45px;">Statistical Summary</div>
<svg style="position:absolute;left:112px;top:292px;" width="16" height="16" viewBox="0 0 16 16"><path d="M3 2 H13 V5 M12 2 H4 L9 8 L4 14 H13 V11" fill="none" stroke="#9a1aa0" stroke-width="2"/></svg>
<div style="position:absolute;left:110px;top:313px;width:436px;height:1px;background:#c8c8c8"></div>
<div class="t" style="left:133px;top:319.6px;font-size:13.5px;line-height:16px;color:#111;font-weight:normal;letter-spacing:0.45px;">Zoom <u>F</u>ull</div>
<div class="t" style="left:437px;top:319.6px;font-size:13.5px;line-height:16px;color:#111;font-weight:normal;letter-spacing:0.45px;">Ctrl+Shift+F</div>
<svg style="position:absolute;left:112px;top:319px;" width="16" height="16" viewBox="0 0 16 16"><rect x="4" y="1" width="12" height="10" fill="#5b8fd0"/><circle cx="10" cy="6" r="3.5" fill="#ddd"/><path d="M1.5 14.5 L6 10" stroke="#333" stroke-width="3"/><path d="M2 14 L5.5 10.5" stroke="#e8b800" stroke-width="1.6"/></svg>
<div class="t" style="left:133px;top:344.6px;font-size:13.5px;line-height:16px;color:#111;font-weight:normal;letter-spacing:0.45px;">Zoom to <u>S</u>election</div>
<div class="t" style="left:437px;top:344.6px;font-size:13.5px;line-height:16px;color:#111;font-weight:normal;letter-spacing:0.45px;">Ctrl+J</div>
<svg style="position:absolute;left:112px;top:344px;" width="16" height="16" viewBox="0 0 16 16"><rect x="3" y="2" width="6" height="9" fill="#f7e74a"/><path d="M1.5 14.5 L6 10" stroke="#333" stroke-width="3"/><path d="M2 14 L5.5 10.5" stroke="#e8b800" stroke-width="1.6"/><circle cx="10" cy="6" r="5" fill="#f4f4e8" stroke="#555" stroke-width="1"/></svg>
<div class="t" style="left:133px;top:369.6px;font-size:13.5px;line-height:16px;color:#111;font-weight:normal;letter-spacing:0.45px;">Zoom to <u>L</u>ayer</div>
<svg style="position:absolute;left:112px;top:369px;" width="16" height="16" viewBox="0 0 16 16"><rect x="3" y="2" width="6" height="9" fill="#ddd" stroke="#aaa"/><path d="M1.5 14.5 L6 10" stroke="#333" stroke-width="3"/><path d="M2 14 L5.5 10.5" stroke="#e8b800" stroke-width="1.6"/><circle cx="10" cy="6" r="5" fill="#eee" stroke="#555" stroke-width="1"/></svg>
<div class="t" style="left:133px;top:394.6px;font-size:13.5px;line-height:16px;color:#b8b8b8;font-weight:normal;letter-spacing:0.45px;">Zoom to Native Resolution (100%)</div>
<svg style="position:absolute;left:112px;top:394px;" width="16" height="16" viewBox="0 0 16 16"><path d="M1.5 14.5 L6 10" stroke="#ddd" stroke-width="3"/><path d="M2 14 L5.5 10.5" stroke="#ddd" stroke-width="1.6"/><circle cx="10" cy="6" r="5" fill="#fafafa" stroke="#ccc" stroke-width="1"/><text x="10" y="8.5" font-size="6" text-anchor="middle" font-family="Liberation Sans" fill="#ccc">1:1</text></svg>
<div class="t" style="left:133px;top:419.6px;font-size:13.5px;line-height:16px;color:#111;font-weight:normal;letter-spacing:0.45px;">Zoom Last</div>
<svg style="position:absolute;left:112px;top:419px;" width="16" height="16" viewBox="0 0 16 16"><path d="M1.5 14.5 L6 10" stroke="#333" stroke-width="3"/><path d="M2 14 L5.5 10.5" stroke="#e8b800" stroke-width="1.6"/><circle cx="10" cy="6" r="5" fill="#eee" stroke="#555" stroke-width="1"/><rect x="9" y="9" width="7" height="7" fill="#5b8fd0"/><path d="M14 10 L11 12.5 L14 15" stroke="#fff" fill="none" stroke-width="1.3"/></svg>
<div class="t" style="left:133px;top:444.6px;font-size:13.5px;line-height:16px;color:#b8b8b8;font-weight:normal;letter-spacing:0.45px;">Zoom Next</div>
<svg style="position:absolute;left:112px;top:444px;" width="16" height="16" viewBox="0 0 16 16"><path d="M1.5 14.5 L6 10" stroke="#ddd" stroke-width="3"/><path d="M2 14 L5.5 10.5" stroke="#ddd" stroke-width="1.6"/><circle cx="10" cy="6" r="5" fill="#fafafa" stroke="#ccc" stroke-width="1"/><rect x="9" y="9" width="7" height="7" fill="#dde6f0"/></svg>
<div style="position:absolute;left:110px;top:465px;width:436px;height:1px;background:#c8c8c8"></div>
<div class="t" style="left:133px;top:471.6px;font-size:13.5px;line-height:16px;color:#111;font-weight:normal;letter-spacing:0.45px;"><u>D</u>ecorations</div>
<svg style="position:absolute;left:540px;top:475px;" width="5" height="8" viewBox="0 0 5 8"><path d="M0 0 L4 4 L0 8Z" fill="#555"/></svg>
<div style="position:absolute;left:105px;top:492px;width:446px;height:25px;background:#308cc6;border-top:1px solid #236ea5;border-bottom:1px solid #236ea5;box-sizing:border-box"></div>
<div class="t" style="left:133px;top:496.6px;font-size:13.5px;line-height:16px;color:#fff;font-weight:normal;letter-spacing:0.45px;">Preview Mode</div>
<svg style="position:absolute;left:540px;top:500px;" width="5" height="8" viewBox="0 0 5 8"><path d="M0 0 L4 4 L0 8Z" fill="#fff"/></svg>
<div class="t" style="left:133px;top:521.6px;font-size:13.5px;line-height:16px;color:#111;font-weight:normal;letter-spacing:0.45px;">Show Map Tips</div>
<svg style="position:absolute;left:112px;top:521px;" width="16" height="16" viewBox="0 0 16 16"><rect x="1" y="1" width="15" height="10" rx="3" fill="#fbe37a" stroke="#d9b92a"/><circle cx="4" cy="13" r="2.5" fill="#5aa05a"/></svg>
<div class="t" style="left:133px;top:546.6px;font-size:13.5px;line-height:16px;color:#111;font-weight:normal;letter-spacing:0.45px;">New Spatial Bookmark...</div>
<div class="t" style="left:437px;top:546.6px;font-size:13.5px;line-height:16px;color:#111;font-weight:normal;letter-spacing:0.45px;">Ctrl+B</div>
<svg style="position:absolute;left:112px;top:546px;" width="16" height="16" viewBox="0 0 16 16"><path d="M4 1 H10 V14 L7 11 L4 14Z" fill="#6a98d0"/><rect x="8.0" y="8.0" width="8" height="8" rx="1.5" fill="#c9a400"/><circle cx="12" cy="12" r="1.30" fill="none" stroke="#fff" stroke-width="1"/><path d="M13.12 12.65 L14.49 13.44 M12.00 13.30 L12.00 14.88 M10.88 12.65 L9.51 13.44 M10.88 11.35 L9.51 10.56 M12.00 10.70 L12.00 9.12 M13.12 11.35 L14.49 10.56" stroke="#fff" stroke-width="1.2"/></svg>
<div class="t" style="left:133px;top:571.6px;font-size:13.5px;line-height:16px;color:#111;font-weight:normal;letter-spacing:0.45px;">Show Spatial Bookmarks</div>
<div class="t" style="left:437px;top:571.6px;font-size:13.5px;line-height:16px;color:#111;font-weight:normal;letter-spacing:0.45px;">Ctrl+Shift+B</div>
<svg style="position:absolute;left:112px;top:571px;" width="16" height="16" viewBox="0 0 16 16"><path d="M2 1 H14 V15 H3 Q2 15 2 14Z" fill="#e4e4e4" stroke="#aaa"/><path d="M8 0 H11 V6 L9.5 4.5 L8 6Z" fill="#6a98d0"/></svg>
<div class="t" style="left:133px;top:596.6px;font-size:13.5px;line-height:16px;color:#111;font-weight:normal;letter-spacing:0.45px;">Show Spatial Bookmark Manager</div>
<svg style="position:absolute;left:112px;top:596px;" width="16" height="16" viewBox="0 0 16 16"><path d="M2 1 H14 V15 H3 Q2 15 2 14Z" fill="#e4e4e4" stroke="#aaa"/><path d="M8 0 H11 V6 L9.5 4.5 L8 6Z" fill="#6a98d0"/></svg>
<div class="t" style="left:133px;top:621.6px;font-size:13.5px;line-height:16px;color:#111;font-weight:normal;letter-spacing:0.45px;">Refresh</div>
<div class="t" style="left:437px;top:621.6px;font-size:13.5px;line-height:16px;color:#111;font-weight:normal;letter-spacing:0.45px;">F5</div>
<svg style="position:absolute;left:112px;top:621px;" width="16" height="16" viewBox="0 0 16 16"><path d="M2 7 A6 6 0 0 1 13 4 L15 2 V8 H9 L11 6 A3.5 3.5 0 0 0 5 7Z" fill="#3f7fcf"/><path d="M14 9 A6 6 0 0 1 3 12 L1 14 V8 H7 L5 10 A3.5 3.5 0 0 0 11 9Z" fill="#3f7fcf"/></svg>
<div style="position:absolute;left:110px;top:642px;width:436px;height:1px;background:#c8c8c8"></div>
<div class="t" style="left:133px;top:648.6px;font-size:13.5px;line-height:16px;color:#111;font-weight:normal;letter-spacing:0.45px;">Show All Layers</div>
<div class="t" style="left:437px;top:648.6px;font-size:13.5px;line-height:16px;color:#111;font-weight:normal;letter-spacing:0.45px;">Ctrl+Shift+U</div>
<svg style="position:absolute;left:112px;top:648px;" width="16" height="16" viewBox="0 0 16 16"><ellipse cx="8" cy="8" rx="7.5" ry="4.5" fill="#eee" stroke="#999"/><circle cx="8" cy="8" r="3" fill="#4a70a0"/><circle cx="8" cy="8" r="1.2" fill="#111"/></svg>
<div class="t" style="left:133px;top:673.6px;font-size:13.5px;line-height:16px;color:#111;font-weight:normal;letter-spacing:0.45px;">Hide All Layers</div>
<div class="t" style="left:437px;top:673.6px;font-size:13.5px;line-height:16px;color:#111;font-weight:normal;letter-spacing:0.45px;">Ctrl+Shift+H</div>
<svg style="position:absolute;left:112px;top:673px;" width="16" height="16" viewBox="0 0 16 16"><path d="M1 7 Q8 2 15 7 Q15 12 8 13 Q1 12 1 7Z" fill="#eee" stroke="#aaa"/></svg>
<div class="t" style="left:133px;top:698.6px;font-size:13.5px;line-height:16px;color:#111;font-weight:normal;letter-spacing:0.45px;">Show Selected Layers</div>
<svg style="position:absolute;left:112px;top:698px;" width="16" height="16" viewBox="0 0 16 16"><ellipse cx="8" cy="8" rx="7.5" ry="4.5" fill="#eee" stroke="#999"/><circle cx="8" cy="8" r="3" fill="#4a70a0"/><circle cx="8" cy="8" r="1.2" fill="#111"/><rect x="9" y="9" width="7" height="7" fill="#f7e74a"/></svg>
<div class="t" style="left:133px;top:723.6px;font-size:13.5px;line-height:16px;color:#111;font-weight:normal;letter-spacing:0.45px;">Hide Selected Layers</div>
<svg style="position:absolute;left:112px;top:723px;" width="16" height="16" viewBox="0 0 16 16"><path d="M1 7 Q8 2 15 7 Q15 12 8 13 Q1 12 1 7Z" fill="#eee" stroke="#aaa"/><rect x="9" y="9" width="7" height="7" fill="#f7e74a"/></svg>
<div class="t" style="left:133px;top:748.6px;font-size:13.5px;line-height:16px;color:#111;font-weight:normal;letter-spacing:0.45px;">Toggle Selected Layers</div>
<svg style="position:absolute;left:112px;top:748px;" width="16" height="16" viewBox="0 0 16 16"><ellipse cx="8" cy="8" rx="7.5" ry="4.5" fill="#eee" stroke="#999"/><circle cx="8" cy="8" r="3" fill="#4a70a0"/><circle cx="8" cy="8" r="1.2" fill="#111"/><rect x="9" y="9" width="7" height="7" fill="#f7e74a"/><path d="M2 2 V14" stroke="#4a4" stroke-width="1.2"/></svg>
<div class="t" style="left:133px;top:773.6px;font-size:13.5px;line-height:16px;color:#111;font-weight:normal;letter-spacing:0.45px;">Toggle Selected Layers Independently</div>
<div class="t" style="left:133px;top:798.6px;font-size:13.5px;line-height:16px;color:#111;font-weight:normal;letter-spacing:0.45px;">Hide Deselected Layers</div>
<svg style="position:absolute;left:112px;top:798px;" width="16" height="16" viewBox="0 0 16 16"><path d="M1 7 Q8 2 15 7 Q15 12 8 13 Q1 12 1 7Z" fill="#eee" stroke="#aaa"/><rect x="9" y="9" width="7" height="7" fill="#eee" stroke="#bbb"/></svg>
<div style="position:absolute;left:110px;top:819px;width:436px;height:1px;background:#c8c8c8"></div>
<div class="t" style="left:133px;top:825.6px;font-size:13.5px;line-height:16px;color:#111;font-weight:normal;letter-spacing:0.45px;">Panels</div>
<svg style="position:absolute;left:540px;top:829px;" width="5" height="8" viewBox="0 0 5 8"><path d="M0 0 L4 4 L0 8Z" fill="#555"/></svg>
<div class="t" style="left:133px;top:850.6px;font-size:13.5px;line-height:16px;color:#111;font-weight:normal;letter-spacing:0.45px;">Toolbars</div>
<svg style="position:absolute;left:540px;top:854px;" width="5" height="8" viewBox="0 0 5 8"><path d="M0 0 L4 4 L0 8Z" fill="#555"/></svg>
<div class="t" style="left:133px;top:875.6px;font-size:13.5px;line-height:16px;color:#111;font-weight:normal;letter-spacing:0.45px;">Toggle Full Scr<u>e</u>en Mode</div>
<div class="t" style="left:437px;top:875.6px;font-size:13.5px;line-height:16px;color:#111;font-weight:normal;letter-spacing:0.45px;">F11</div>
<div class="t" style="left:133px;top:900.6px;font-size:13.5px;line-height:16px;color:#111;font-weight:normal;letter-spacing:0.45px;">Toggle Panel <u>V</u>isibility</div>
<div class="t" style="left:437px;top:900.6px;font-size:13.5px;line-height:16px;color:#111;font-weight:normal;letter-spacing:0.45px;">Ctrl+Tab</div>
<div class="t" style="left:133px;top:925.6px;font-size:13.5px;line-height:16px;color:#111;font-weight:normal;letter-spacing:0.45px;">Toggle Map Only</div>
<div class="t" style="left:437px;top:925.6px;font-size:13.5px;line-height:16px;color:#111;font-weight:normal;letter-spacing:0.45px;">Ctrl+Shift+Tab</div>
<div style="position:absolute;left:550px;top:492px;width:345px;height:125px;background:#fff;border:1px solid #a6a6a6;box-sizing:border-box;box-shadow:1px 1px 2px rgba(0,0,0,0.12)"></div>
<div style="position:absolute;left:550px;top:492px;width:345px;height:25px;background:#308cc6;border:1px solid #236ea5;box-sizing:border-box"></div>
<svg style="position:absolute;left:562px;top:502px;" width="6" height="6" viewBox="0 0 6 6"><circle cx="3" cy="3" r="2.8" fill="#fff"/></svg>
<div class="t" style="left:578px;top:496.6px;font-size:13.5px;line-height:16px;color:#fff;font-weight:normal;letter-spacing:0.45px;">Normal</div>
<div class="t" style="left:578px;top:521.6px;font-size:13.5px;line-height:16px;color:#111;font-weight:normal;letter-spacing:0.45px;">Simulate Photocopy (Grayscale)</div>
<div class="t" style="left:578px;top:546.6px;font-size:13.5px;line-height:16px;color:#111;font-weight:normal;letter-spacing:0.45px;">Simulate Fax (Mono)</div>
<div class="t" style="left:578px;top:571.6px;font-size:13.5px;line-height:16px;color:#111;font-weight:normal;letter-spacing:0.45px;">Simulate Color Blindness (Protanope)</div>
<div class="t" style="left:578px;top:596.6px;font-size:13.5px;line-height:16px;color:#111;font-weight:normal;letter-spacing:0.45px;">Simulate Color Blindness (Deuteranope)</div>
<svg style="position:absolute;left:852px;top:507px;" width="14" height="21" viewBox="0 0 14 21"><path d="M1 1 V17 L5 13 L8 20 L11 19 L8 12 H13Z" fill="#111" stroke="#fff" stroke-width="1"/></svg>
</body></html>
